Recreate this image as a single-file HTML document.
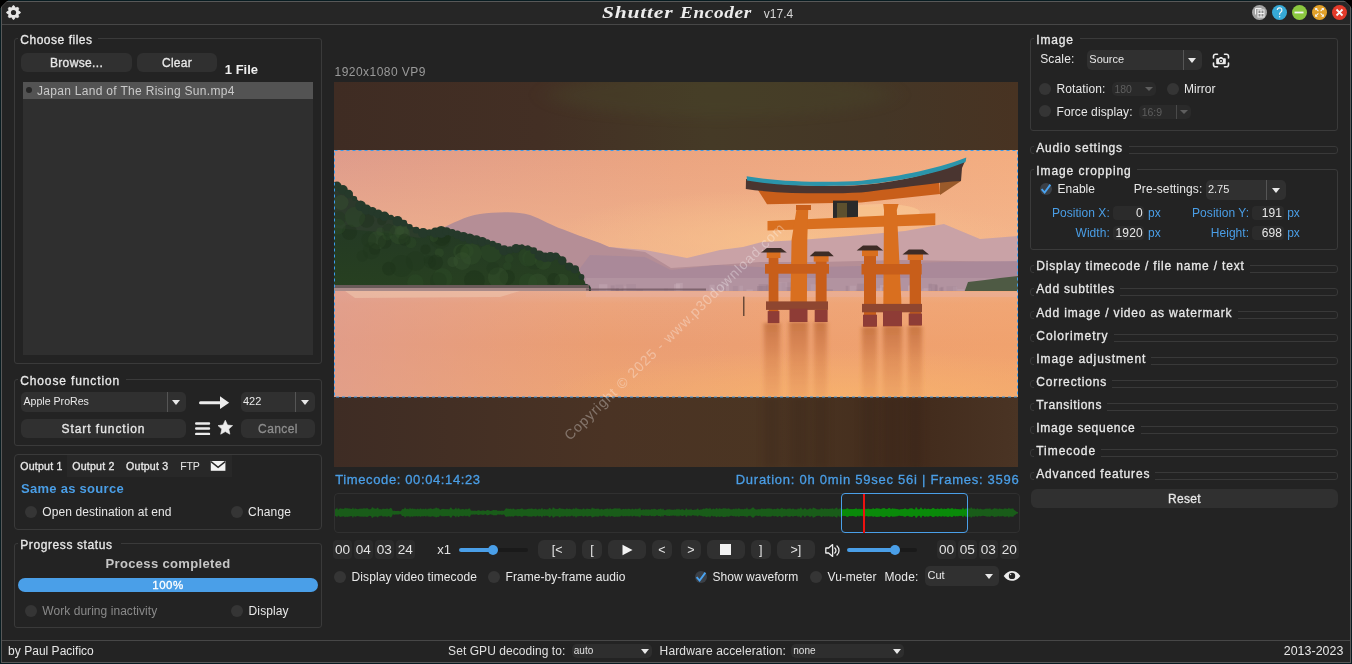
<!DOCTYPE html><html><head><meta charset="utf-8"><style>
html,body{margin:0;padding:0;width:1352px;height:664px;overflow:hidden;background:#0d2a30;}
#w{position:absolute;left:0;top:0;width:1352px;height:664px;will-change:transform;}
.t{position:absolute;white-space:nowrap;font-family:"Liberation Sans",sans-serif;}
.r{position:absolute;box-sizing:content-box;}
svg{position:absolute;}
</style></head><body><div id="w">
<div class="r" style="left:0;top:0;width:1352px;height:664px;background:#081c21"></div>
<div class="r" style="left:0;top:0;width:8px;height:8px;background:#000"></div>
<div class="r" style="left:1344px;top:0;width:8px;height:8px;background:#000"></div>
<div class="r" style="left:1px;top:1px;width:1350px;height:662px;background:#585858;border-radius:0px;clip-path:polygon(6px 0,calc(100% - 6px) 0,100% 6px,100% 100%,0 100%,0 6px);"></div>
<div class="r" style="left:2px;top:2px;width:1348px;height:660px;background:#232323;border-radius:0px;clip-path:polygon(5px 0,calc(100% - 5px) 0,100% 5px,100% 100%,0 100%,0 5px);"></div>
<div class="r" style="left:2px;top:2px;width:1348px;height:22px;background:#262626;border-radius:0px;clip-path:polygon(5px 0,calc(100% - 5px) 0,100% 5px,100% 100%,0 100%,0 5px);"></div>
<div class="r" style="left:2px;top:24px;width:1348px;height:1px;background:#474747;border-radius:0px;"></div>
<div class="r" style="left:2px;top:640px;width:1348px;height:1px;background:#474747;border-radius:0px;"></div>
<svg style="left:334px;top:82px" width="684" height="385" viewBox="334 82 684 385">
<defs>
<linearGradient id="skyh" x1="0" y1="0" x2="1" y2="0">
 <stop offset="0" stop-color="#de9b8b"/><stop offset="0.5" stop-color="#eba480"/><stop offset="1" stop-color="#f3ad80"/>
</linearGradient>
<linearGradient id="skyv" x1="0" y1="0" x2="0" y2="1">
 <stop offset="0" stop-color="#f4b890" stop-opacity="0"/><stop offset="1" stop-color="#f4bc94" stop-opacity="0.9"/>
</linearGradient>
<radialGradient id="glow" cx="0.66" cy="0.62" r="0.35">
 <stop offset="0" stop-color="#f9c58c" stop-opacity="0.7"/><stop offset="1" stop-color="#f9c58c" stop-opacity="0"/>
</radialGradient>
<radialGradient id="wglow" cx="0.75" cy="1" r="0.45">
 <stop offset="0" stop-color="#f8b46c" stop-opacity="0.75"/><stop offset="1" stop-color="#f8b46c" stop-opacity="0"/>
</radialGradient>
<linearGradient id="water" x1="0" y1="0" x2="0" y2="1">
 <stop offset="0" stop-color="#e9ad90"/><stop offset="0.12" stop-color="#eca47c"/><stop offset="0.5" stop-color="#eb9e72"/><stop offset="1" stop-color="#eea474"/>
</linearGradient>
<linearGradient id="waterh" x1="0" y1="0" x2="1" y2="0">
 <stop offset="0" stop-color="#dc9c94" stop-opacity="0.65"/><stop offset="0.4" stop-color="#e09c90" stop-opacity="0"/><stop offset="0.65" stop-color="#f8a868" stop-opacity="0.2"/><stop offset="1" stop-color="#f8a868" stop-opacity="0.4"/>
</linearGradient>
<linearGradient id="topbox" x1="0" y1="0" x2="1" y2="0">
 <stop offset="0" stop-color="#3f2c23"/><stop offset="0.3" stop-color="#432f24"/><stop offset="0.55" stop-color="#453a26"/><stop offset="0.8" stop-color="#443626"/><stop offset="1" stop-color="#483322"/>
</linearGradient>
<linearGradient id="botbox" x1="0" y1="0" x2="1" y2="0">
 <stop offset="0" stop-color="#3e2c24"/><stop offset="0.4" stop-color="#4a3324"/><stop offset="0.65" stop-color="#4b3522"/><stop offset="0.85" stop-color="#422b1c"/><stop offset="1" stop-color="#4a3424"/>
</linearGradient>
<linearGradient id="refl" x1="0" y1="0" x2="0" y2="1">
 <stop offset="0" stop-color="#b05a28" stop-opacity="0.6"/><stop offset="0.5" stop-color="#c87038" stop-opacity="0.38"/><stop offset="1" stop-color="#d88048" stop-opacity="0.2"/>
</linearGradient>
<filter id="bl" x="-50%" y="-10%" width="200%" height="120%"><feGaussianBlur stdDeviation="2 1.5"/></filter><filter id="bl3" x="-100%" y="-10%" width="300%" height="120%"><feGaussianBlur stdDeviation="4 2"/></filter><filter id="bl2" x="-20%" y="-100%" width="140%" height="300%"><feGaussianBlur stdDeviation="12 6"/></filter>
<linearGradient id="hill" x1="0" y1="0" x2="0" y2="1">
 <stop offset="0" stop-color="#233025"/><stop offset="0.45" stop-color="#243a24"/><stop offset="1" stop-color="#274020"/>
</linearGradient>
</defs>
<rect x="334" y="82" width="684" height="68" fill="url(#topbox)"/>
<rect x="334" y="397" width="684" height="70" fill="url(#botbox)"/>
<ellipse cx="720" cy="95" rx="170" ry="22" fill="#4a482c" opacity="0.32" filter="url(#bl2)"/>
<g fill="#2e1c12" opacity="0.2" filter="url(#bl3)"><rect x="764" y="397" width="16" height="70"/><rect x="789" y="397" width="19" height="70"/><rect x="814" y="397" width="13" height="70"/><rect x="862" y="397" width="15" height="70"/><rect x="883" y="397" width="19" height="70"/><rect x="908" y="397" width="14" height="70"/></g>
<rect x="334" y="150" width="684" height="145" fill="url(#skyh)"/>
<rect x="334" y="150" width="684" height="145" fill="url(#skyv)"/>
<rect x="334" y="150" width="684" height="145" fill="url(#glow)"/>
<ellipse cx="880" cy="212" rx="40" ry="8" fill="#fbd09a" opacity="0.5"/>
<path d="M580 236 L609 247 L645 250 L687 258 L720 250 L743 247 L762 242 L800 240 L850 236 L905 231 L944 224 L980 239 L1018 236 L1018 295 L580 295 Z" fill="#c9a2a6"/>
<path d="M430 295 L440 229 C452 224 465 216 480 214 C495 212 515 211 530 215 C542 219 552 226 562 229 L580 236 L600 243 L609 247 L645 252 L671 268 L717 265 L760 262 L820 262 L900 260 L1018 262 L1018 295 Z" fill="#b58e96"/>
<path d="M560 295 L590 255 L645 257 L671 270 L717 265 L780 268 L860 266 L940 262 L1018 261 L1018 295 Z" fill="#a8889a" opacity="0.85"/>
<rect x="586" y="278" width="432" height="15" fill="#b89aa6" opacity="0.55"/>
<rect x="726.0" y="284.8" width="3.2" height="7.2" fill="#d8c0c8" opacity="0.25"/>
<rect x="934.9" y="285.3" width="2.8" height="6.7" fill="#8a7080" opacity="0.25"/>
<rect x="605.7" y="289.4" width="5.5" height="2.6" fill="#d8c0c8" opacity="0.25"/>
<rect x="821.4" y="285.5" width="2.5" height="6.5" fill="#8a7080" opacity="0.25"/>
<rect x="854.9" y="289.5" width="6.7" height="2.5" fill="#9a8090" opacity="0.25"/>
<rect x="610.8" y="285.5" width="3.8" height="6.5" fill="#8a7080" opacity="0.25"/>
<rect x="711.6" y="289.1" width="3.2" height="2.9" fill="#c8b0bc" opacity="0.25"/>
<rect x="825.3" y="289.2" width="7.5" height="2.8" fill="#8a7080" opacity="0.25"/>
<rect x="746.4" y="289.5" width="6.4" height="2.5" fill="#d8c0c8" opacity="0.25"/>
<rect x="850.0" y="285.7" width="6.0" height="6.3" fill="#c8b0bc" opacity="0.25"/>
<rect x="785.6" y="287.1" width="9.4" height="4.9" fill="#8a7080" opacity="0.25"/>
<rect x="923.6" y="288.0" width="7.6" height="4.0" fill="#c8b0bc" opacity="0.25"/>
<rect x="810.6" y="284.2" width="9.0" height="7.8" fill="#c8b0bc" opacity="0.25"/>
<rect x="845.8" y="285.9" width="2.6" height="6.1" fill="#8a7080" opacity="0.25"/>
<rect x="908.0" y="286.1" width="3.2" height="5.9" fill="#d8c0c8" opacity="0.25"/>
<rect x="994.0" y="285.5" width="2.6" height="6.5" fill="#c8b0bc" opacity="0.25"/>
<rect x="732.9" y="286.0" width="4.8" height="6.0" fill="#9a8090" opacity="0.25"/>
<rect x="618.9" y="287.8" width="2.7" height="4.2" fill="#d8c0c8" opacity="0.25"/>
<rect x="615.5" y="284.8" width="7.6" height="7.2" fill="#9a8090" opacity="0.25"/>
<rect x="709.5" y="284.7" width="5.1" height="7.3" fill="#d8c0c8" opacity="0.25"/>
<rect x="985.1" y="285.1" width="4.8" height="6.9" fill="#9a8090" opacity="0.25"/>
<rect x="614.8" y="289.0" width="8.1" height="3.0" fill="#8a7080" opacity="0.25"/>
<rect x="757.1" y="286.0" width="9.3" height="6.0" fill="#8a7080" opacity="0.25"/>
<rect x="778.7" y="282.9" width="6.4" height="9.1" fill="#9a8090" opacity="0.25"/>
<rect x="952.9" y="286.7" width="4.2" height="5.3" fill="#c8b0bc" opacity="0.25"/>
<rect x="876.7" y="288.2" width="5.0" height="3.8" fill="#d8c0c8" opacity="0.25"/>
<rect x="664.0" y="288.1" width="3.9" height="3.9" fill="#9a8090" opacity="0.25"/>
<rect x="939.1" y="287.7" width="3.5" height="4.3" fill="#8a7080" opacity="0.25"/>
<rect x="766.0" y="285.5" width="5.0" height="6.5" fill="#8a7080" opacity="0.25"/>
<rect x="880.0" y="285.1" width="6.1" height="6.9" fill="#d8c0c8" opacity="0.25"/>
<rect x="781.8" y="282.4" width="9.0" height="9.6" fill="#9a8090" opacity="0.25"/>
<rect x="757.2" y="286.1" width="5.2" height="5.9" fill="#9a8090" opacity="0.25"/>
<rect x="616.1" y="288.3" width="2.5" height="3.7" fill="#8a7080" opacity="0.25"/>
<rect x="636.2" y="289.2" width="6.8" height="2.8" fill="#8a7080" opacity="0.25"/>
<rect x="815.4" y="285.1" width="9.6" height="6.9" fill="#d8c0c8" opacity="0.25"/>
<rect x="957.2" y="288.8" width="6.9" height="3.2" fill="#c8b0bc" opacity="0.25"/>
<rect x="991.3" y="286.2" width="6.8" height="5.8" fill="#d8c0c8" opacity="0.25"/>
<rect x="946.6" y="286.3" width="9.9" height="5.7" fill="#9a8090" opacity="0.25"/>
<rect x="721.0" y="284.0" width="3.2" height="8.0" fill="#c8b0bc" opacity="0.25"/>
<rect x="791.0" y="285.9" width="7.5" height="6.1" fill="#8a7080" opacity="0.25"/>
<rect x="989.4" y="288.8" width="6.2" height="3.2" fill="#d8c0c8" opacity="0.25"/>
<rect x="908.4" y="284.9" width="4.4" height="7.1" fill="#d8c0c8" opacity="0.25"/>
<rect x="882.4" y="287.1" width="4.1" height="4.9" fill="#8a7080" opacity="0.25"/>
<rect x="739.4" y="285.7" width="3.8" height="6.3" fill="#c8b0bc" opacity="0.25"/>
<rect x="857.3" y="283.7" width="6.9" height="8.3" fill="#8a7080" opacity="0.25"/>
<rect x="928.6" y="284.1" width="8.5" height="7.9" fill="#8a7080" opacity="0.25"/>
<rect x="674.0" y="284.2" width="5.9" height="7.8" fill="#d8c0c8" opacity="0.25"/>
<rect x="921.8" y="288.5" width="5.8" height="3.5" fill="#c8b0bc" opacity="0.25"/>
<rect x="777.8" y="282.1" width="9.5" height="9.9" fill="#c8b0bc" opacity="0.25"/>
<rect x="623.8" y="286.2" width="2.8" height="5.8" fill="#c8b0bc" opacity="0.25"/>
<rect x="675.8" y="282.8" width="7.0" height="9.2" fill="#d8c0c8" opacity="0.25"/>
<rect x="791.4" y="283.6" width="7.2" height="8.4" fill="#d8c0c8" opacity="0.25"/>
<rect x="940.6" y="286.9" width="3.0" height="5.1" fill="#8a7080" opacity="0.25"/>
<rect x="790.8" y="283.7" width="3.4" height="8.3" fill="#c8b0bc" opacity="0.25"/>
<rect x="626.4" y="284.2" width="9.6" height="7.8" fill="#9a8090" opacity="0.25"/>
<rect x="758.6" y="284.2" width="9.6" height="7.8" fill="#8a7080" opacity="0.25"/>
<rect x="1007.1" y="285.3" width="2.2" height="6.7" fill="#9a8090" opacity="0.25"/>
<rect x="928.7" y="283.4" width="3.2" height="8.6" fill="#9a8090" opacity="0.25"/>
<rect x="866.1" y="285.6" width="4.8" height="6.4" fill="#8a7080" opacity="0.25"/>
<rect x="599.0" y="284.2" width="8.4" height="7.8" fill="#d8c0c8" opacity="0.25"/>
<path d="M964 293 L968 282 L985 280 L1000 278 L1018 276 L1018 293 Z" fill="#4e5a44"/>
<path d="M334.0 181.8 L345.8 188.7 L363.5 205.4 L381.2 212.3 L400.9 219.2 L412.7 227.0 L426.5 231.0 L444.2 228.0 L460.0 233.0 L479.6 237.9 L495.3 242.8 L507.0 248.7 L519.0 244.8 L530.7 246.7 L542.5 254.6 L558.3 253.6 L566.2 262.5 L578.0 268.4 L585.0 282.1 L586.0 290.0 L334.0 290.0 Z" fill="url(#hill)"/>
<path d="M334 181.8 L345.8 188.7 L363.5 205.4 L381.2 212.3 L400.9 219.2 L412.7 227 L426.5 231 L420 238 L380 232 L334 228 Z" fill="#3a4236" opacity="0.4"/>
<circle cx="442.5" cy="277.9" r="9.8" fill="#2f4c28" opacity="0.35"/>
<circle cx="341.0" cy="202.5" r="7.5" fill="#3a5530" opacity="0.35"/>
<circle cx="415.5" cy="261.0" r="9.8" fill="#1f361c" opacity="0.35"/>
<circle cx="561.5" cy="280.9" r="7.2" fill="#3a5530" opacity="0.35"/>
<circle cx="537.8" cy="283.3" r="9.8" fill="#3a5530" opacity="0.35"/>
<circle cx="366.7" cy="220.2" r="7.6" fill="#1a2e18" opacity="0.35"/>
<circle cx="528.1" cy="282.7" r="9.4" fill="#2f4c28" opacity="0.35"/>
<circle cx="377.1" cy="240.4" r="9.1" fill="#3a5530" opacity="0.35"/>
<circle cx="349.4" cy="232.2" r="7.7" fill="#1a2e18" opacity="0.35"/>
<circle cx="530.1" cy="257.9" r="7.9" fill="#2f4c28" opacity="0.35"/>
<circle cx="381.8" cy="220.6" r="4.7" fill="#1a2e18" opacity="0.35"/>
<circle cx="474.4" cy="280.6" r="10.4" fill="#1a2e18" opacity="0.35"/>
<circle cx="415.4" cy="282.5" r="8.2" fill="#2f4c28" opacity="0.35"/>
<circle cx="507.2" cy="277.3" r="7.7" fill="#1a2e18" opacity="0.35"/>
<circle cx="460.9" cy="251.6" r="7.7" fill="#35522c" opacity="0.35"/>
<circle cx="384.6" cy="241.9" r="6.9" fill="#1a2e18" opacity="0.35"/>
<circle cx="444.5" cy="237.7" r="5.7" fill="#1f361c" opacity="0.35"/>
<circle cx="387.2" cy="235.5" r="4.9" fill="#2f4c28" opacity="0.35"/>
<circle cx="425.5" cy="249.4" r="5.0" fill="#1a2e18" opacity="0.35"/>
<circle cx="388.9" cy="268.6" r="6.8" fill="#1a2e18" opacity="0.35"/>
<circle cx="374.7" cy="249.2" r="5.6" fill="#1a2e18" opacity="0.35"/>
<circle cx="439.3" cy="252.7" r="4.6" fill="#35522c" opacity="0.35"/>
<circle cx="338.9" cy="218.4" r="7.1" fill="#1f361c" opacity="0.35"/>
<circle cx="430.1" cy="262.3" r="6.1" fill="#1f361c" opacity="0.35"/>
<circle cx="362.2" cy="256.1" r="5.6" fill="#1f361c" opacity="0.35"/>
<circle cx="355.0" cy="217.0" r="10.3" fill="#2f4c28" opacity="0.35"/>
<circle cx="401.6" cy="232.1" r="7.0" fill="#35522c" opacity="0.35"/>
<circle cx="435.5" cy="262.3" r="7.6" fill="#1a2e18" opacity="0.35"/>
<circle cx="509.1" cy="258.5" r="4.4" fill="#2f4c28" opacity="0.35"/>
<circle cx="440.3" cy="238.3" r="10.6" fill="#1f361c" opacity="0.35"/>
<circle cx="534.4" cy="259.4" r="10.0" fill="#1f361c" opacity="0.35"/>
<circle cx="400.1" cy="231.0" r="4.1" fill="#3a5530" opacity="0.35"/>
<circle cx="438.4" cy="280.7" r="8.4" fill="#1f361c" opacity="0.35"/>
<circle cx="465.7" cy="252.4" r="4.8" fill="#2f4c28" opacity="0.35"/>
<circle cx="399.5" cy="233.8" r="10.5" fill="#35522c" opacity="0.35"/>
<circle cx="466.8" cy="251.0" r="7.1" fill="#2f4c28" opacity="0.35"/>
<circle cx="401.6" cy="265.9" r="11.0" fill="#1f361c" opacity="0.35"/>
<circle cx="337.8" cy="226.7" r="7.9" fill="#2f4c28" opacity="0.35"/>
<circle cx="462.6" cy="251.9" r="7.1" fill="#1a2e18" opacity="0.35"/>
<circle cx="498.1" cy="277.5" r="10.2" fill="#3a5530" opacity="0.35"/>
<circle cx="410.9" cy="242.6" r="5.6" fill="#2f4c28" opacity="0.35"/>
<circle cx="493.0" cy="268.3" r="6.4" fill="#1f361c" opacity="0.35"/>
<circle cx="543.2" cy="261.3" r="8.4" fill="#35522c" opacity="0.35"/>
<circle cx="441.7" cy="237.2" r="8.7" fill="#1a2e18" opacity="0.35"/>
<circle cx="404.5" cy="239.7" r="6.1" fill="#1a2e18" opacity="0.35"/>
<circle cx="380.3" cy="231.4" r="4.0" fill="#35522c" opacity="0.35"/>
<circle cx="470.8" cy="253.9" r="10.8" fill="#35522c" opacity="0.35"/>
<circle cx="388.5" cy="230.0" r="6.3" fill="#1f361c" opacity="0.35"/>
<circle cx="452.7" cy="261.8" r="5.4" fill="#3a5530" opacity="0.35"/>
<circle cx="528.1" cy="256.8" r="9.7" fill="#2f4c28" opacity="0.35"/>
<circle cx="433.9" cy="237.8" r="4.2" fill="#35522c" opacity="0.35"/>
<circle cx="491.4" cy="251.8" r="10.7" fill="#2f4c28" opacity="0.35"/>
<circle cx="553.8" cy="279.4" r="6.3" fill="#1a2e18" opacity="0.35"/>
<circle cx="371.4" cy="250.7" r="8.5" fill="#1f361c" opacity="0.35"/>
<circle cx="462.2" cy="261.0" r="8.9" fill="#3a5530" opacity="0.35"/>
<circle cx="368.8" cy="239.7" r="7.5" fill="#1f361c" opacity="0.35"/>
<circle cx="507.3" cy="266.1" r="4.2" fill="#2f4c28" opacity="0.35"/>
<circle cx="428.2" cy="259.3" r="4.4" fill="#1f361c" opacity="0.35"/>
<circle cx="336.9" cy="186.3" r="4.7" fill="#25392a"/>
<circle cx="342.9" cy="189.9" r="4.9" fill="#25392a"/>
<circle cx="348.8" cy="194.0" r="4.2" fill="#25392a"/>
<circle cx="354.6" cy="198.6" r="2.5" fill="#25392a"/>
<circle cx="360.6" cy="205.8" r="5.3" fill="#25392a"/>
<circle cx="366.4" cy="209.6" r="5.1" fill="#25392a"/>
<circle cx="372.4" cy="211.4" r="4.3" fill="#25392a"/>
<circle cx="378.2" cy="213.8" r="4.4" fill="#25392a"/>
<circle cx="384.5" cy="216.3" r="4.8" fill="#25392a"/>
<circle cx="391.0" cy="217.4" r="2.7" fill="#25392a"/>
<circle cx="397.6" cy="221.1" r="5.1" fill="#25392a"/>
<circle cx="403.8" cy="223.2" r="3.4" fill="#25392a"/>
<circle cx="409.8" cy="226.7" r="2.8" fill="#25392a"/>
<circle cx="416.1" cy="230.1" r="3.4" fill="#25392a"/>
<circle cx="423.1" cy="233.0" r="5.1" fill="#25392a"/>
<circle cx="429.4" cy="232.4" r="3.2" fill="#25392a"/>
<circle cx="435.4" cy="232.6" r="5.1" fill="#25392a"/>
<circle cx="441.2" cy="232.0" r="5.9" fill="#25392a"/>
<circle cx="446.8" cy="231.4" r="4.2" fill="#25392a"/>
<circle cx="452.1" cy="232.8" r="3.8" fill="#25392a"/>
<circle cx="457.4" cy="234.7" r="4.2" fill="#25392a"/>
<circle cx="463.3" cy="236.8" r="4.9" fill="#25392a"/>
<circle cx="469.8" cy="238.6" r="5.2" fill="#25392a"/>
<circle cx="476.3" cy="239.9" r="4.7" fill="#25392a"/>
<circle cx="482.2" cy="241.6" r="4.7" fill="#25392a"/>
<circle cx="487.5" cy="242.0" r="2.8" fill="#25392a"/>
<circle cx="492.7" cy="243.8" r="3.0" fill="#25392a"/>
<circle cx="498.2" cy="246.3" r="3.4" fill="#25392a"/>
<circle cx="504.1" cy="250.3" r="5.1" fill="#25392a"/>
<circle cx="510.0" cy="249.9" r="3.6" fill="#25392a"/>
<circle cx="516.0" cy="248.5" r="4.5" fill="#25392a"/>
<circle cx="521.9" cy="246.8" r="2.5" fill="#25392a"/>
<circle cx="527.8" cy="247.9" r="2.7" fill="#25392a"/>
<circle cx="533.7" cy="250.7" r="3.4" fill="#25392a"/>
<circle cx="539.5" cy="255.5" r="4.9" fill="#25392a"/>
<circle cx="545.1" cy="257.4" r="4.9" fill="#25392a"/>
<circle cx="550.4" cy="257.0" r="4.9" fill="#25392a"/>
<circle cx="555.7" cy="255.9" r="3.5" fill="#25392a"/>
<circle cx="562.2" cy="260.6" r="4.3" fill="#25392a"/>
<circle cx="569.2" cy="266.5" r="4.1" fill="#25392a"/>
<circle cx="575.0" cy="269.4" r="4.1" fill="#25392a"/>
<circle cx="581.5" cy="277.0" r="2.9" fill="#25392a"/>
<circle cx="585.5" cy="289.4" r="5.6" fill="#25392a"/>
<rect x="334" y="285" width="255" height="3" fill="#6a5a58"/>
<rect x="334" y="288" width="255" height="3" fill="#a88a88"/>
<rect x="586" y="288.5" width="120" height="2" fill="#6a5058" opacity="0.7"/>
<rect x="334" y="291" width="684" height="106" fill="url(#water)"/>
<rect x="334" y="291" width="684" height="106" fill="url(#waterh)"/>
<rect x="334" y="291" width="684" height="106" fill="url(#wglow)"/>
<path d="M345 291 L520 291 L500 297 L355 298 Z" fill="#ecc0a8" opacity="0.7"/>
<rect x="586" y="292" width="432" height="5" fill="#e8b0a0" opacity="0.5"/>
<g fill="url(#refl)" filter="url(#bl)"><rect x="764" y="323" width="16" height="74"/><rect x="789" y="322" width="19" height="75"/><rect x="814" y="322" width="13" height="75"/><rect x="862" y="327" width="15" height="70"/><rect x="883" y="326" width="19" height="71"/><rect x="908" y="326" width="14" height="71"/></g>
<path d="M758 190 L861 192 L939 180 L940 194 L861 202.4 L767 204.2 Z" fill="#c85e1a"/>
<path d="M940 170 L961 168 L961 181 L940 195 Z" fill="#9a5a2a"/>
<path d="M746 179 C780 186 830 187 861.5 185 C890 183 935 175 966 159 L962 168 L961 181 C940 182 900 188 861 192.5 C830 194 780 194 745.8 189 Z" fill="#4a3530"/>
<path d="M746.7 176.2 C780 182 830 183 861.5 180.7 C890 178 935 170 966.3 157.6 L965.5 162 C935 175 890 182.5 861.5 184.8 C830 187 780 186.5 747 180.5 Z" fill="#2b94aa"/>
<rect x="833" y="200.6" width="25" height="21" fill="#2a2a2a"/>
<rect x="837" y="203" width="10" height="16" fill="#6a5a30" opacity="0.8"/>
<rect x="860" y="207" width="22" height="12" fill="#f6c28a" opacity="0.6"/>
<path d="M767.5 221 L935.3 213.3 L935.3 225 L767.5 230.4 Z" fill="#d96f1f"/>
<path d="M796.4 205 L810.9 205 L808.2 210 L807.3 240 L806.8 322 L790 322 L791.6 240 L796.4 210 Z" fill="#d96f1f"/>
<rect x="796" y="205" width="15" height="5" fill="#c85e1a"/>
<path d="M883.2 204 L898.6 204 L896.8 210 L901.3 300 L901.5 326.3 L883.2 326.3 L884 210 Z" fill="#d96f1f"/>
<rect x="768.7" y="252" width="9.7" height="71.1" fill="#c85e1a"/>
<rect x="766.7" y="252" width="13.7" height="6" fill="#d96f1f"/>
<path d="M761 252.5 L786.8 252.5 L780.9 247.9 L766.9 247.9 Z" fill="#3d2c26"/>
<rect x="767.7" y="311.1" width="11.7" height="12" fill="#8e3c36"/>
<rect x="815.7" y="255.7" width="10.9" height="66.3" fill="#c85e1a"/>
<rect x="813.7" y="255.7" width="14.9" height="6" fill="#d96f1f"/>
<path d="M809.7 256.2 L833.8 256.2 L828.8 251.5 L814.8 251.5 Z" fill="#3d2c26"/>
<rect x="814.7" y="310" width="12.9" height="12" fill="#8e3c36"/>
<rect x="864" y="250.1" width="12.0" height="76.6" fill="#c85e1a"/>
<rect x="862" y="250.1" width="16.0" height="6" fill="#d96f1f"/>
<path d="M856.7 250.6 L883.2 250.6 L877.0 245.5 L863.0 245.5 Z" fill="#3d2c26"/>
<rect x="863" y="314.7" width="14.0" height="12" fill="#8e3c36"/>
<rect x="909.7" y="254" width="11.3" height="71.5" fill="#c85e1a"/>
<rect x="907.7" y="254" width="15.3" height="6" fill="#d96f1f"/>
<path d="M902.5 254.5 L929 254.5 L922.8 249.5 L908.8 249.5 Z" fill="#3d2c26"/>
<rect x="908.7" y="313.5" width="13.3" height="12" fill="#8e3c36"/>
<rect x="765" y="264" width="64" height="9.7" fill="#c85e1a"/><rect x="861.5" y="264" width="60.2" height="10.5" fill="#c85e1a"/>
<rect x="766" y="301.4" width="62" height="8.5" fill="#8e4630"/><rect x="862" y="303.9" width="60" height="8.4" fill="#8e4630"/>
<rect x="789.5" y="308.7" width="18" height="13.3" fill="#8e3c36"/><rect x="883" y="311" width="19" height="15.3" fill="#8e3c36"/>
<rect x="743" y="296.6" width="1.5" height="19.4" fill="#6a4a38"/>
<rect x="669" y="290" width="1.5" height="16" fill="#6a4a38" opacity="0"/>
<rect x="334.5" y="150.5" width="683" height="246.5" fill="none" stroke="#3a9cec" stroke-width="1" stroke-dasharray="3 3"/>
<text x="0" y="0" transform="translate(570 441) rotate(-44.5)" font-family="Liberation Sans" font-size="14" fill="#ffffff" fill-opacity="0.32" letter-spacing="0.9">Copyright © 2025 - www.p30download.com</text>
</svg>
<svg style="left:5px;top:3.7px" width="17" height="17" viewBox="0 0 17 17">
<path fill="#e6e6e6" stroke="#e6e6e6" stroke-width="0.8" stroke-linejoin="round" d="M7.91 1.73 L9.09 1.73 L10.38 3.97 L12.87 3.29 L13.71 4.13 L13.03 6.62 L15.27 7.91 L15.27 9.09 L13.03 10.38 L13.71 12.87 L12.87 13.71 L10.38 13.03 L9.09 15.27 L7.91 15.27 L6.62 13.03 L4.13 13.71 L3.29 12.87 L3.97 10.38 L1.73 9.09 L1.73 7.91 L3.97 6.62 L3.29 4.13 L4.13 3.29 L6.62 3.97Z"/><circle cx="8.5" cy="8.5" r="2.6" fill="#262626"/></svg>
<div class="t" style="left:601.50px;top:0.91px;font-size:17px;line-height:24px;color:#ececec;font-weight:bold;letter-spacing:0.6px;font-family:'Liberation Serif';font-style:italic;transform:scaleX(1.27);transform-origin:0 0;">Shutter</div>
<div class="t" style="left:679.50px;top:0.91px;font-size:17px;line-height:24px;color:#ececec;font-weight:bold;letter-spacing:0.6px;font-family:'Liberation Serif';font-style:italic;transform:scaleX(1.13);transform-origin:0 0;">Encoder</div>
<div class="t" style="left:763.80px;top:6.04px;font-size:12px;line-height:17px;color:#d6d6d6;font-weight:normal;letter-spacing:0px;font-family:'Liberation Sans';">v17.4</div>
<div class="r" style="left:1252.0px;top:4.8px;width:15px;height:15px;border-radius:50%;background:#a3a3a3"></div>
<div class="r" style="left:1272.0px;top:4.8px;width:15px;height:15px;border-radius:50%;background:#36a9d6"></div>
<div class="r" style="left:1292.0px;top:4.8px;width:15px;height:15px;border-radius:50%;background:#8bc83f"></div>
<div class="r" style="left:1312.0px;top:4.8px;width:15px;height:15px;border-radius:50%;background:#e1a12a"></div>
<div class="r" style="left:1332.0px;top:4.8px;width:15px;height:15px;border-radius:50%;background:#e33b2b"></div>
<svg style="left:1252px;top:5px" width="95" height="15" viewBox="0 0 95 15">
<path d="M3.5 9.5V3.5H9.5" fill="none" stroke="#f2f2f2" stroke-width="1"/>
<rect x="5.5" y="4.5" width="7" height="8" fill="#f2f2f2"/>
<g fill="#8c8c8c"><rect x="6.5" y="5.5" width="2" height="2.5"/><rect x="9.5" y="5.5" width="2" height="2.5"/><rect x="6.5" y="9" width="2" height="2.5"/><rect x="9.5" y="9" width="2" height="2.5"/></g>
<path d="M25.3 5.1a2.3 2.3 0 1 1 3.6 1.9c-.9.6-1.3 1-1.3 2.1v.6" fill="none" stroke="#f4f4f4" stroke-width="1.2"/>
<circle cx="27.6" cy="11.8" r=".75" fill="#f4f4f4"/>
<rect x="42.5" y="6.6" width="9" height="1.8" fill="#f4f4f4"/>
<g stroke="#f6f6f6" stroke-width="1.1" fill="none"><path d="M66.4 6.199999999999999L64.1 3.9M68.6 6.199999999999999L70.9 3.9M66.4 8.4L64.1 10.7M68.6 8.4L70.9 10.7"/></g>
<g fill="#f6f6f6"><path d="M63.1 2.8999999999999995h2.7l-2.7 2.7z M71.9 2.8999999999999995h-2.7l2.7 2.7z M63.1 11.7h2.7l-2.7-2.7z M71.9 11.7h-2.7l2.7-2.7z"/></g>
<path d="M84.5 4.5l6 6M90.5 4.5l-6 6" stroke="#f8f8f8" stroke-width="1.8"/>
</svg>
<div class="r" style="left:14px;top:38px;width:306px;height:324px;border:1px solid #3a3a3a;border-radius:3px;"></div>
<div class="r" style="left:18px;top:37px;width:80px;height:3px;background:#232323;border-radius:0px;"></div>
<div class="t" style="left:20.30px;top:31.74px;font-size:12px;line-height:17px;color:#e8e8e8;font-weight:normal;letter-spacing:0.52px;font-family:'Liberation Sans';-webkit-text-stroke:0.3px currentColor;">Choose files</div>
<div class="r" style="left:21px;top:53px;width:111px;height:19px;background:#303030;border-radius:6px;"></div>
<div class="t" style="left:-123.50px;width:400px;text-align:center;top:55.14px;font-size:12px;line-height:17px;color:#e8e8e8;font-weight:normal;letter-spacing:0.35px;font-family:'Liberation Sans';-webkit-text-stroke:0.3px currentColor;">Browse...</div>
<div class="r" style="left:137px;top:53px;width:80px;height:19px;background:#303030;border-radius:6px;"></div>
<div class="t" style="left:-23.00px;width:400px;text-align:center;top:55.14px;font-size:12px;line-height:17px;color:#e8e8e8;font-weight:normal;letter-spacing:0.25px;font-family:'Liberation Sans';-webkit-text-stroke:0.3px currentColor;">Clear</div>
<div class="t" style="left:224.80px;top:60.70px;font-size:13px;line-height:18px;color:#f0f0f0;font-weight:bold;letter-spacing:0px;font-family:'Liberation Sans';">1 File</div>
<div class="r" style="left:23px;top:82px;width:290px;height:273px;background:#2f2f2f;border-radius:0px;"></div>
<div class="r" style="left:23px;top:82px;width:290px;height:17px;background:#535353;border-radius:0px;"></div>
<div class="r" style="left:26px;top:87.2px;width:6px;height:6px;border-radius:50%;background:#262626"></div>
<div class="t" style="left:36.90px;top:83.04px;font-size:12px;line-height:17px;color:#c9c9c9;font-weight:normal;letter-spacing:0.31px;font-family:'Liberation Sans';">Japan Land of The Rising Sun.mp4</div>
<div class="r" style="left:14px;top:379px;width:306px;height:65px;border:1px solid #3a3a3a;border-radius:3px;"></div>
<div class="r" style="left:18px;top:378px;width:108px;height:3px;background:#232323;border-radius:0px;"></div>
<div class="t" style="left:20.20px;top:372.64px;font-size:12px;line-height:17px;color:#e8e8e8;font-weight:normal;letter-spacing:0.88px;font-family:'Liberation Sans';-webkit-text-stroke:0.3px currentColor;">Choose function</div>
<div class="r" style="left:21px;top:392px;width:165px;height:20px;background:#303030;border-radius:5px;"></div>
<div class="r" style="left:167px;top:392px;width:1px;height:20px;background:#555;border-radius:0px;"></div>
<div class="r" style="left:172.00px;top:399.50px;width:0;height:0;border-left:4.50px solid transparent;border-right:4.50px solid transparent;border-top:5px solid #e8e8e8"></div>
<div class="t" style="left:23.50px;top:393.93px;font-size:10.6px;line-height:15px;color:#e8e8e8;font-weight:normal;letter-spacing:0px;font-family:'Liberation Sans';">Apple ProRes</div>
<svg style="left:198px;top:395px" width="33" height="16" viewBox="0 0 33 16">
<path d="M2.5 7.7H23" stroke="#ececec" stroke-width="3" stroke-linecap="round"/>
<path d="M22 1.3L31.2 7.7L22 14.1z" fill="#ececec"/></svg>
<div class="r" style="left:241px;top:392px;width:74px;height:20px;background:#303030;border-radius:5px;"></div>
<div class="r" style="left:295px;top:392px;width:1px;height:20px;background:#555;border-radius:0px;"></div>
<div class="r" style="left:300.50px;top:399.50px;width:0;height:0;border-left:4.50px solid transparent;border-right:4.50px solid transparent;border-top:5px solid #e8e8e8"></div>
<div class="t" style="left:243.00px;top:394.09px;font-size:11px;line-height:15px;color:#e8e8e8;font-weight:normal;letter-spacing:0px;font-family:'Liberation Sans';">422</div>
<div class="r" style="left:21px;top:419px;width:165px;height:19px;background:#303030;border-radius:6px;"></div>
<div class="t" style="left:-96.50px;width:400px;text-align:center;top:421.44px;font-size:12px;line-height:17px;color:#e8e8e8;font-weight:normal;letter-spacing:0.95px;font-family:'Liberation Sans';-webkit-text-stroke:0.3px currentColor;">Start function</div>
<svg style="left:194px;top:420px" width="18" height="16" viewBox="0 0 18 16">
<g stroke="#ececec" stroke-width="2.4" stroke-linecap="round"><path d="M2.2 3.5h12.8M2.2 8.5h12.8M2.2 13.9h12.8"/></g></svg>
<svg style="left:216px;top:418px" width="18" height="19" viewBox="0 0 18 19">
<path fill="#ececec" stroke="#ececec" stroke-width="0.6" stroke-linejoin="round" d="M9.3 2.2l2.2 4.8 5.1.6-3.8 3.5 1.1 5.1-4.6-2.6-4.6 2.6 1.1-5.1L2 7.6l5.1-.6z"/></svg>
<div class="r" style="left:241px;top:419px;width:74px;height:19px;background:#303030;border-radius:6px;"></div>
<div class="t" style="left:78.00px;width:400px;text-align:center;top:421.44px;font-size:12px;line-height:17px;color:#8d8d8d;font-weight:normal;letter-spacing:0.4px;font-family:'Liberation Sans';-webkit-text-stroke:0.3px currentColor;">Cancel</div>
<div class="r" style="left:14px;top:454px;width:306px;height:74px;border:1px solid #3a3a3a;border-radius:4px;"></div>
<div class="r" style="left:67px;top:455px;width:165px;height:22px;background:#282828;border-radius:0px;"></div>
<div class="t" style="left:20.30px;top:458.73px;font-size:10.6px;line-height:15px;color:#e8e8e8;font-weight:normal;letter-spacing:0.2px;font-family:'Liberation Sans';-webkit-text-stroke:0.3px currentColor;">Output 1</div>
<div class="t" style="left:72.30px;top:458.73px;font-size:10.6px;line-height:15px;color:#e8e8e8;font-weight:normal;letter-spacing:0.2px;font-family:'Liberation Sans';-webkit-text-stroke:0.3px currentColor;">Output 2</div>
<div class="t" style="left:126.10px;top:458.73px;font-size:10.6px;line-height:15px;color:#e8e8e8;font-weight:normal;letter-spacing:0.2px;font-family:'Liberation Sans';-webkit-text-stroke:0.3px currentColor;">Output 3</div>
<div class="t" style="left:180.30px;top:458.73px;font-size:10.6px;line-height:15px;color:#e8e8e8;font-weight:normal;letter-spacing:-0.2px;font-family:'Liberation Sans';">FTP</div>
<svg style="left:210px;top:460px" width="17" height="12" viewBox="0 0 17 12">
<rect x="0.8" y="1" width="14.6" height="9.8" fill="#f2f2f2"/>
<path d="M1 1.6L8.1 7.4L15.2 1.6" fill="none" stroke="#282828" stroke-width="1.4"/></svg>
<div class="t" style="left:21.00px;top:480.00px;font-size:13px;line-height:18px;color:#4a9ee6;font-weight:bold;letter-spacing:0.28px;font-family:'Liberation Sans';">Same as source</div>
<div class="r" style="left:25px;top:505.8px;width:12px;height:12px;border-radius:50%;background:#353535"></div>
<div class="t" style="left:42.30px;top:503.94px;font-size:12px;line-height:17px;color:#e8e8e8;font-weight:normal;letter-spacing:0.08px;font-family:'Liberation Sans';">Open destination at end</div>
<div class="r" style="left:231px;top:505.8px;width:12px;height:12px;border-radius:50%;background:#353535"></div>
<div class="t" style="left:248.10px;top:503.94px;font-size:12px;line-height:17px;color:#e8e8e8;font-weight:normal;letter-spacing:0.15px;font-family:'Liberation Sans';">Change</div>
<div class="r" style="left:14px;top:543px;width:306px;height:83px;border:1px solid #3a3a3a;border-radius:3px;"></div>
<div class="r" style="left:18px;top:542px;width:103px;height:3px;background:#232323;border-radius:0px;"></div>
<div class="t" style="left:20.20px;top:536.74px;font-size:12px;line-height:17px;color:#e8e8e8;font-weight:normal;letter-spacing:0.6px;font-family:'Liberation Sans';-webkit-text-stroke:0.3px currentColor;">Progress status</div>
<div class="t" style="left:-32.00px;width:400px;text-align:center;top:555.40px;font-size:13px;line-height:18px;color:#c6c6c6;font-weight:bold;letter-spacing:0.34px;font-family:'Liberation Sans';">Process completed</div>
<div class="r" style="left:18px;top:578px;width:300px;height:14px;background:#4a9fe8;border-radius:7px;"></div>
<div class="t" style="left:-32.00px;width:400px;text-align:center;top:577.22px;font-size:11.5px;line-height:16px;color:#ffffff;font-weight:normal;letter-spacing:0.5px;font-family:'Liberation Sans';-webkit-text-stroke:0.3px currentColor;">100%</div>
<div class="r" style="left:25px;top:604.9px;width:12px;height:12px;border-radius:50%;background:#353535"></div>
<div class="t" style="left:42.30px;top:603.14px;font-size:12px;line-height:17px;color:#8a8a8a;font-weight:normal;letter-spacing:0.05px;font-family:'Liberation Sans';">Work during inactivity</div>
<div class="r" style="left:231px;top:604.9px;width:12px;height:12px;border-radius:50%;background:#353535"></div>
<div class="t" style="left:248.60px;top:603.14px;font-size:12px;line-height:17px;color:#e8e8e8;font-weight:normal;letter-spacing:0.1px;font-family:'Liberation Sans';">Display</div>
<div class="t" style="left:334.60px;top:64.04px;font-size:12px;line-height:17px;color:#9a9a9a;font-weight:normal;letter-spacing:0.45px;font-family:'Liberation Sans';">1920x1080 VP9</div>
<div class="t" style="left:335.20px;top:471.20px;font-size:13px;line-height:18px;color:#4a9ee6;font-weight:normal;letter-spacing:0.62px;font-family:'Liberation Sans';-webkit-text-stroke:0.3px currentColor;">Timecode: 00:04:14:23</div>
<div class="t" style="right:332.50px;top:471.30px;font-size:13px;line-height:18px;color:#4a9ee6;font-weight:normal;letter-spacing:0.74px;font-family:'Liberation Sans';-webkit-text-stroke:0.3px currentColor;">Duration: 0h 0min 59sec 56i | Frames: 3596</div>
<div class="r" style="left:334px;top:493px;width:684px;height:38px;border:1px solid #303030;border-radius:4px;"></div>
<svg style="left:0;top:0" width="1352" height="664"><defs><clipPath id="sel"><rect x="841" y="493" width="127" height="40"/></clipPath></defs><path d="M335.0,509.3 L336.0,509.1 L337.0,507.6 L338.0,509.7 L339.0,509.3 L340.0,508.2 L341.0,508.4 L342.0,508.7 L343.0,508.7 L344.0,508.9 L345.0,507.5 L346.0,508.6 L347.0,508.0 L348.0,508.4 L349.0,508.6 L350.0,508.6 L351.0,509.1 L352.0,509.0 L353.0,507.2 L354.0,509.5 L355.0,508.3 L356.0,508.8 L357.0,508.9 L358.0,509.2 L359.0,508.8 L360.0,508.7 L361.0,508.4 L362.0,508.7 L363.0,508.4 L364.0,508.3 L365.0,508.6 L366.0,508.5 L367.0,508.1 L368.0,508.4 L369.0,509.6 L370.0,509.1 L371.0,509.3 L372.0,507.2 L373.0,507.6 L374.0,508.6 L375.0,508.4 L376.0,508.9 L377.0,508.0 L378.0,507.6 L379.0,509.4 L380.0,508.8 L381.0,509.6 L382.0,509.2 L383.0,508.4 L384.0,509.0 L385.0,508.7 L386.0,508.9 L387.0,508.3 L388.0,509.1 L389.0,509.3 L390.0,508.2 L391.0,507.7 L392.0,509.1 L393.0,511.3 L394.0,510.4 L395.0,510.9 L396.0,510.9 L397.0,510.9 L398.0,510.8 L399.0,510.9 L400.0,511.2 L401.0,510.9 L402.0,509.2 L403.0,509.1 L404.0,509.2 L405.0,507.3 L406.0,508.8 L407.0,509.2 L408.0,508.5 L409.0,509.4 L410.0,507.5 L411.0,509.2 L412.0,508.4 L413.0,508.4 L414.0,509.2 L415.0,508.4 L416.0,509.4 L417.0,508.9 L418.0,508.5 L419.0,509.4 L420.0,508.5 L421.0,508.5 L422.0,509.5 L423.0,508.5 L424.0,509.2 L425.0,509.1 L426.0,508.3 L427.0,509.7 L428.0,508.4 L429.0,509.0 L430.0,508.3 L431.0,508.6 L432.0,508.7 L433.0,509.3 L434.0,508.2 L435.0,508.8 L436.0,507.3 L437.0,508.3 L438.0,508.3 L439.0,508.4 L440.0,509.7 L441.0,509.4 L442.0,508.7 L443.0,509.1 L444.0,508.8 L445.0,509.3 L446.0,509.0 L447.0,509.2 L448.0,508.9 L449.0,509.4 L450.0,508.3 L451.0,507.3 L452.0,508.8 L453.0,509.6 L454.0,509.3 L455.0,509.1 L456.0,507.3 L457.0,509.6 L458.0,508.3 L459.0,508.2 L460.0,509.6 L461.0,509.2 L462.0,509.2 L463.0,508.8 L464.0,509.4 L465.0,509.5 L466.0,508.6 L467.0,509.6 L468.0,509.1 L469.0,508.5 L470.0,508.5 L471.0,510.7 L472.0,510.6 L473.0,510.7 L474.0,510.7 L475.0,510.6 L476.0,511.0 L477.0,510.7 L478.0,510.3 L479.0,510.3 L480.0,510.8 L481.0,510.9 L482.0,510.5 L483.0,510.4 L484.0,510.4 L485.0,511.0 L486.0,511.0 L487.0,509.8 L488.0,510.3 L489.0,510.3 L490.0,511.0 L491.0,510.9 L492.0,510.5 L493.0,510.3 L494.0,509.7 L495.0,510.4 L496.0,509.8 L497.0,510.4 L498.0,511.0 L499.0,510.6 L500.0,510.9 L501.0,510.8 L502.0,510.4 L503.0,510.7 L504.0,510.8 L505.0,509.6 L506.0,508.2 L507.0,508.6 L508.0,508.7 L509.0,508.7 L510.0,509.0 L511.0,508.4 L512.0,509.6 L513.0,508.3 L514.0,509.0 L515.0,509.4 L516.0,509.4 L517.0,509.2 L518.0,508.7 L519.0,509.3 L520.0,509.1 L521.0,508.8 L522.0,508.2 L523.0,509.0 L524.0,509.4 L525.0,509.2 L526.0,509.5 L527.0,509.0 L528.0,509.0 L529.0,508.5 L530.0,509.0 L531.0,508.4 L532.0,508.6 L533.0,509.0 L534.0,509.3 L535.0,508.7 L536.0,508.4 L537.0,509.4 L538.0,509.4 L539.0,508.4 L540.0,509.3 L541.0,509.2 L542.0,507.4 L543.0,509.6 L544.0,509.3 L545.0,508.8 L546.0,509.7 L547.0,509.0 L548.0,509.4 L549.0,508.3 L550.0,507.7 L551.0,509.3 L552.0,509.5 L553.0,507.1 L554.0,508.3 L555.0,508.5 L556.0,509.3 L557.0,508.7 L558.0,509.3 L559.0,508.3 L560.0,507.7 L561.0,509.0 L562.0,508.6 L563.0,508.9 L564.0,508.7 L565.0,509.4 L566.0,508.7 L567.0,508.3 L568.0,509.2 L569.0,508.8 L570.0,508.7 L571.0,509.2 L572.0,509.6 L573.0,508.6 L574.0,508.6 L575.0,509.3 L576.0,507.2 L577.0,508.9 L578.0,508.5 L579.0,509.2 L580.0,508.9 L581.0,509.2 L582.0,509.5 L583.0,508.4 L584.0,508.5 L585.0,509.4 L586.0,509.1 L587.0,508.5 L588.0,508.8 L589.0,509.1 L590.0,508.9 L591.0,509.4 L592.0,507.3 L593.0,508.5 L594.0,508.3 L595.0,508.9 L596.0,508.7 L597.0,508.7 L598.0,508.4 L599.0,508.8 L600.0,509.7 L601.0,508.7 L602.0,508.9 L603.0,509.4 L604.0,509.6 L605.0,508.7 L606.0,508.9 L607.0,508.4 L608.0,508.5 L609.0,509.6 L610.0,508.1 L611.0,508.9 L612.0,509.2 L613.0,508.7 L614.0,508.4 L615.0,508.3 L616.0,508.6 L617.0,508.5 L618.0,508.4 L619.0,508.6 L620.0,508.3 L621.0,509.6 L622.0,509.5 L623.0,508.7 L624.0,509.1 L625.0,509.2 L626.0,508.6 L627.0,509.4 L628.0,508.6 L629.0,509.1 L630.0,508.8 L631.0,509.7 L632.0,508.5 L633.0,509.0 L634.0,509.4 L635.0,509.1 L636.0,508.5 L637.0,509.4 L638.0,508.4 L639.0,509.0 L640.0,507.4 L641.0,509.8 L642.0,510.3 L643.0,509.1 L644.0,509.7 L645.0,509.6 L646.0,509.2 L647.0,509.4 L648.0,509.4 L649.0,509.2 L650.0,510.0 L651.0,509.3 L652.0,508.9 L653.0,509.5 L654.0,508.6 L655.0,509.3 L656.0,509.1 L657.0,510.2 L658.0,509.2 L659.0,509.1 L660.0,509.3 L661.0,508.2 L662.0,509.9 L663.0,508.2 L664.0,509.9 L665.0,510.2 L666.0,509.9 L667.0,509.2 L668.0,509.4 L669.0,509.3 L670.0,509.2 L671.0,509.8 L672.0,509.4 L673.0,510.0 L674.0,509.4 L675.0,509.4 L676.0,509.7 L677.0,508.5 L678.0,509.7 L679.0,508.5 L680.0,510.0 L681.0,509.5 L682.0,509.3 L683.0,509.2 L684.0,509.9 L685.0,510.2 L686.0,508.2 L687.0,508.7 L688.0,510.2 L689.0,509.1 L690.0,510.1 L691.0,508.6 L692.0,510.0 L693.0,510.0 L694.0,509.8 L695.0,509.6 L696.0,509.7 L697.0,509.1 L698.0,508.3 L699.0,510.3 L700.0,509.4 L701.0,509.6 L702.0,509.4 L703.0,508.8 L704.0,508.6 L705.0,509.2 L706.0,507.8 L707.0,508.4 L708.0,508.5 L709.0,508.9 L710.0,507.4 L711.0,509.2 L712.0,509.6 L713.0,508.6 L714.0,508.7 L715.0,509.4 L716.0,508.2 L717.0,507.9 L718.0,509.4 L719.0,508.3 L720.0,508.4 L721.0,508.8 L722.0,508.9 L723.0,508.3 L724.0,508.3 L725.0,508.5 L726.0,508.2 L727.0,509.3 L728.0,508.2 L729.0,508.6 L730.0,508.9 L731.0,509.6 L732.0,509.3 L733.0,509.2 L734.0,508.6 L735.0,509.5 L736.0,507.9 L737.0,509.5 L738.0,508.6 L739.0,508.2 L740.0,509.1 L741.0,509.2 L742.0,508.9 L743.0,509.2 L744.0,509.3 L745.0,508.4 L746.0,509.3 L747.0,507.3 L748.0,509.5 L749.0,508.9 L750.0,509.6 L751.0,508.5 L752.0,508.2 L753.0,507.0 L754.0,508.2 L755.0,509.1 L756.0,509.6 L757.0,509.6 L758.0,509.3 L759.0,509.1 L760.0,509.6 L761.0,508.8 L762.0,508.3 L763.0,509.3 L764.0,508.6 L765.0,508.9 L766.0,508.9 L767.0,508.2 L768.0,508.7 L769.0,508.3 L770.0,508.7 L771.0,508.5 L772.0,509.1 L773.0,509.4 L774.0,508.7 L775.0,508.9 L776.0,509.2 L777.0,508.5 L778.0,508.3 L779.0,509.2 L780.0,509.1 L781.0,508.5 L782.0,507.6 L783.0,508.8 L784.0,509.0 L785.0,508.6 L786.0,509.5 L787.0,509.1 L788.0,508.4 L789.0,508.7 L790.0,508.3 L791.0,509.1 L792.0,509.2 L793.0,508.3 L794.0,509.2 L795.0,509.3 L796.0,509.3 L797.0,509.6 L798.0,508.2 L799.0,508.9 L800.0,508.4 L801.0,507.3 L802.0,509.3 L803.0,509.6 L804.0,509.0 L805.0,507.7 L806.0,509.3 L807.0,509.5 L808.0,509.4 L809.0,508.7 L810.0,508.3 L811.0,508.6 L812.0,509.4 L813.0,507.2 L814.0,508.3 L815.0,507.9 L816.0,509.1 L817.0,509.3 L818.0,509.5 L819.0,509.2 L820.0,509.6 L821.0,508.3 L822.0,508.2 L823.0,509.2 L824.0,509.0 L825.0,508.0 L826.0,509.2 L827.0,508.5 L828.0,509.0 L829.0,509.0 L830.0,508.5 L831.0,508.8 L832.0,508.4 L833.0,508.3 L834.0,509.4 L835.0,508.2 L836.0,508.2 L837.0,507.2 L838.0,509.7 L839.0,508.5 L840.0,508.7 L841.0,507.4 L842.0,508.9 L843.0,509.5 L844.0,509.2 L845.0,509.1 L846.0,509.2 L847.0,508.2 L848.0,508.4 L849.0,509.3 L850.0,509.3 L851.0,508.9 L852.0,509.2 L853.0,509.3 L854.0,509.0 L855.0,508.9 L856.0,508.2 L857.0,509.0 L858.0,509.6 L859.0,508.4 L860.0,509.6 L861.0,509.1 L862.0,509.2 L863.0,508.9 L864.0,509.1 L865.0,508.6 L866.0,509.2 L867.0,509.1 L868.0,508.7 L869.0,508.8 L870.0,509.4 L871.0,508.8 L872.0,509.6 L873.0,508.1 L874.0,508.9 L875.0,508.9 L876.0,508.5 L877.0,508.3 L878.0,508.7 L879.0,508.4 L880.0,509.0 L881.0,509.3 L882.0,508.5 L883.0,508.4 L884.0,508.0 L885.0,508.5 L886.0,509.3 L887.0,508.9 L888.0,508.8 L889.0,507.8 L890.0,508.2 L891.0,509.6 L892.0,508.6 L893.0,508.4 L894.0,509.0 L895.0,508.4 L896.0,509.2 L897.0,508.8 L898.0,509.4 L899.0,509.6 L900.0,509.7 L901.0,508.9 L902.0,509.6 L903.0,509.0 L904.0,508.9 L905.0,508.2 L906.0,508.9 L907.0,509.3 L908.0,509.5 L909.0,508.8 L910.0,508.5 L911.0,508.4 L912.0,508.2 L913.0,509.1 L914.0,509.4 L915.0,509.4 L916.0,507.1 L917.0,508.3 L918.0,509.4 L919.0,509.6 L920.0,509.1 L921.0,507.3 L922.0,509.1 L923.0,509.4 L924.0,509.3 L925.0,508.0 L926.0,509.4 L927.0,508.9 L928.0,508.7 L929.0,508.7 L930.0,509.4 L931.0,509.1 L932.0,508.8 L933.0,507.8 L934.0,508.5 L935.0,509.0 L936.0,509.3 L937.0,508.7 L938.0,508.5 L939.0,509.2 L940.0,509.0 L941.0,508.6 L942.0,508.6 L943.0,509.5 L944.0,508.4 L945.0,508.9 L946.0,509.0 L947.0,508.8 L948.0,508.2 L949.0,508.6 L950.0,509.2 L951.0,508.4 L952.0,508.2 L953.0,508.6 L954.0,509.7 L955.0,508.6 L956.0,509.0 L957.0,509.3 L958.0,508.9 L959.0,509.5 L960.0,509.2 L961.0,509.4 L962.0,509.4 L963.0,507.6 L964.0,509.6 L965.0,509.4 L966.0,508.2 L967.0,508.9 L968.0,508.4 L969.0,507.9 L970.0,509.3 L971.0,507.1 L972.0,508.3 L973.0,509.0 L974.0,508.3 L975.0,508.8 L976.0,509.4 L977.0,508.2 L978.0,508.6 L979.0,509.6 L980.0,508.6 L981.0,509.0 L982.0,509.2 L983.0,509.5 L984.0,509.3 L985.0,509.1 L986.0,508.6 L987.0,508.7 L988.0,508.5 L989.0,508.9 L990.0,507.9 L991.0,509.4 L992.0,509.4 L993.0,508.9 L994.0,508.4 L995.0,507.9 L996.0,508.9 L997.0,508.3 L998.0,509.5 L999.0,508.6 L1000.0,508.6 L1001.0,508.9 L1002.0,508.8 L1003.0,509.5 L1004.0,508.4 L1005.0,508.5 L1006.0,508.5 L1007.0,509.0 L1008.0,508.8 L1009.0,507.4 L1010.0,509.3 L1011.0,508.2 L1012.0,508.9 L1013.0,507.9 L1014.0,509.8 L1015.0,510.4 L1016.0,511.2 L1017.0,511.9 L1018.0,511.9 L1018.0,513.5 L1017.0,513.4 L1016.0,514.2 L1015.0,514.9 L1014.0,515.5 L1013.0,517.2 L1012.0,516.3 L1011.0,516.9 L1010.0,516.0 L1009.0,517.7 L1008.0,516.4 L1007.0,516.2 L1006.0,516.7 L1005.0,516.7 L1004.0,516.8 L1003.0,515.7 L1002.0,516.4 L1001.0,516.3 L1000.0,516.6 L999.0,516.6 L998.0,515.8 L997.0,516.9 L996.0,516.3 L995.0,517.2 L994.0,516.8 L993.0,516.3 L992.0,515.9 L991.0,515.8 L990.0,517.2 L989.0,516.3 L988.0,516.7 L987.0,516.5 L986.0,516.6 L985.0,516.1 L984.0,515.9 L983.0,515.8 L982.0,516.0 L981.0,516.2 L980.0,516.6 L979.0,515.7 L978.0,516.6 L977.0,517.0 L976.0,515.8 L975.0,516.4 L974.0,516.9 L973.0,516.2 L972.0,516.9 L971.0,518.0 L970.0,515.9 L969.0,517.3 L968.0,516.8 L967.0,516.3 L966.0,516.9 L965.0,515.8 L964.0,515.6 L963.0,517.5 L962.0,515.8 L961.0,515.8 L960.0,516.0 L959.0,515.7 L958.0,516.4 L957.0,515.9 L956.0,516.2 L955.0,516.6 L954.0,515.6 L953.0,516.6 L952.0,517.0 L951.0,516.8 L950.0,516.0 L949.0,516.6 L948.0,517.0 L947.0,516.4 L946.0,516.2 L945.0,516.3 L944.0,516.8 L943.0,515.7 L942.0,516.6 L941.0,516.6 L940.0,516.2 L939.0,516.0 L938.0,516.7 L937.0,516.5 L936.0,515.9 L935.0,516.2 L934.0,516.7 L933.0,517.3 L932.0,516.4 L931.0,516.1 L930.0,515.8 L929.0,516.5 L928.0,516.5 L927.0,516.4 L926.0,515.9 L925.0,517.2 L924.0,515.9 L923.0,515.8 L922.0,516.1 L921.0,517.9 L920.0,516.1 L919.0,515.6 L918.0,515.9 L917.0,516.9 L916.0,518.0 L915.0,515.9 L914.0,515.8 L913.0,516.2 L912.0,517.0 L911.0,516.8 L910.0,516.6 L909.0,516.4 L908.0,515.7 L907.0,516.0 L906.0,516.3 L905.0,516.9 L904.0,516.3 L903.0,516.2 L902.0,515.7 L901.0,516.3 L900.0,515.6 L899.0,515.7 L898.0,515.8 L897.0,516.4 L896.0,516.0 L895.0,516.8 L894.0,516.2 L893.0,516.8 L892.0,516.6 L891.0,515.7 L890.0,516.9 L889.0,517.3 L888.0,516.4 L887.0,516.3 L886.0,515.9 L885.0,516.7 L884.0,517.2 L883.0,516.8 L882.0,516.7 L881.0,516.0 L880.0,516.2 L879.0,516.8 L878.0,516.5 L877.0,516.9 L876.0,516.7 L875.0,516.3 L874.0,516.3 L873.0,517.1 L872.0,515.7 L871.0,516.4 L870.0,515.9 L869.0,516.4 L868.0,516.5 L867.0,516.1 L866.0,516.0 L865.0,516.6 L864.0,516.2 L863.0,516.3 L862.0,516.1 L861.0,516.1 L860.0,515.6 L859.0,516.8 L858.0,515.6 L857.0,516.2 L856.0,517.0 L855.0,516.3 L854.0,516.2 L853.0,516.0 L852.0,516.0 L851.0,516.3 L850.0,515.9 L849.0,516.0 L848.0,516.8 L847.0,516.9 L846.0,516.1 L845.0,516.1 L844.0,516.0 L843.0,515.8 L842.0,516.3 L841.0,517.8 L840.0,516.5 L839.0,516.7 L838.0,515.6 L837.0,517.9 L836.0,516.9 L835.0,517.0 L834.0,515.8 L833.0,516.9 L832.0,516.8 L831.0,516.4 L830.0,516.7 L829.0,516.2 L828.0,516.2 L827.0,516.7 L826.0,516.0 L825.0,517.1 L824.0,516.2 L823.0,516.1 L822.0,516.9 L821.0,516.9 L820.0,515.7 L819.0,516.1 L818.0,515.8 L817.0,516.0 L816.0,516.1 L815.0,517.2 L814.0,516.9 L813.0,517.9 L812.0,515.8 L811.0,516.6 L810.0,516.9 L809.0,516.5 L808.0,515.8 L807.0,515.8 L806.0,515.9 L805.0,517.5 L804.0,516.2 L803.0,515.6 L802.0,516.0 L801.0,517.9 L800.0,516.7 L799.0,516.3 L798.0,517.0 L797.0,515.7 L796.0,515.9 L795.0,516.0 L794.0,516.0 L793.0,516.9 L792.0,516.0 L791.0,516.1 L790.0,516.9 L789.0,516.5 L788.0,516.8 L787.0,516.1 L786.0,515.7 L785.0,516.6 L784.0,516.2 L783.0,516.4 L782.0,517.6 L781.0,516.7 L780.0,516.1 L779.0,516.0 L778.0,516.9 L777.0,516.7 L776.0,516.1 L775.0,516.3 L774.0,516.5 L773.0,515.8 L772.0,516.1 L771.0,516.7 L770.0,516.5 L769.0,516.8 L768.0,516.5 L767.0,516.9 L766.0,516.3 L765.0,516.3 L764.0,516.6 L763.0,515.9 L762.0,516.9 L761.0,516.4 L760.0,515.6 L759.0,516.1 L758.0,515.9 L757.0,515.7 L756.0,515.6 L755.0,516.2 L754.0,517.0 L753.0,518.1 L752.0,516.9 L751.0,516.6 L750.0,515.6 L749.0,516.3 L748.0,515.7 L747.0,517.8 L746.0,516.0 L745.0,516.8 L744.0,516.0 L743.0,516.1 L742.0,516.3 L741.0,516.0 L740.0,516.1 L739.0,516.9 L738.0,516.5 L737.0,515.8 L736.0,517.3 L735.0,515.7 L734.0,516.6 L733.0,516.0 L732.0,515.9 L731.0,515.6 L730.0,516.3 L729.0,516.6 L728.0,517.0 L727.0,516.0 L726.0,517.0 L725.0,516.7 L724.0,516.9 L723.0,516.9 L722.0,516.3 L721.0,516.4 L720.0,516.8 L719.0,516.9 L718.0,515.9 L717.0,517.3 L716.0,517.0 L715.0,515.9 L714.0,516.5 L713.0,516.6 L712.0,515.7 L711.0,516.0 L710.0,517.7 L709.0,516.3 L708.0,516.7 L707.0,516.7 L706.0,517.3 L705.0,516.0 L704.0,516.6 L703.0,516.4 L702.0,515.9 L701.0,515.7 L700.0,515.8 L699.0,515.0 L698.0,516.8 L697.0,516.1 L696.0,515.6 L695.0,515.7 L694.0,515.5 L693.0,515.2 L692.0,515.2 L691.0,516.6 L690.0,515.2 L689.0,516.2 L688.0,515.1 L687.0,516.5 L686.0,517.0 L685.0,515.1 L684.0,515.4 L683.0,516.0 L682.0,516.0 L681.0,515.7 L680.0,515.3 L679.0,516.7 L678.0,515.5 L677.0,516.7 L676.0,515.5 L675.0,515.8 L674.0,515.8 L673.0,515.3 L672.0,515.9 L671.0,515.5 L670.0,516.0 L669.0,515.9 L668.0,515.8 L667.0,516.0 L666.0,515.4 L665.0,515.1 L664.0,515.3 L663.0,517.0 L662.0,515.3 L661.0,517.0 L660.0,515.9 L659.0,516.1 L658.0,516.0 L657.0,515.0 L656.0,516.1 L655.0,515.9 L654.0,516.6 L653.0,515.8 L652.0,516.3 L651.0,515.9 L650.0,515.3 L649.0,516.0 L648.0,515.9 L647.0,515.8 L646.0,516.0 L645.0,515.7 L644.0,515.5 L643.0,516.1 L642.0,515.0 L641.0,515.4 L640.0,517.7 L639.0,516.2 L638.0,516.8 L637.0,515.8 L636.0,516.7 L635.0,516.1 L634.0,515.8 L633.0,516.2 L632.0,516.7 L631.0,515.6 L630.0,516.4 L629.0,516.1 L628.0,516.6 L627.0,515.8 L626.0,516.6 L625.0,516.0 L624.0,516.2 L623.0,516.5 L622.0,515.8 L621.0,515.7 L620.0,516.8 L619.0,516.6 L618.0,516.8 L617.0,516.7 L616.0,516.6 L615.0,516.9 L614.0,516.8 L613.0,516.5 L612.0,516.0 L611.0,516.3 L610.0,517.0 L609.0,515.6 L608.0,516.7 L607.0,516.8 L606.0,516.4 L605.0,516.5 L604.0,515.6 L603.0,515.8 L602.0,516.3 L601.0,516.5 L600.0,515.6 L599.0,516.4 L598.0,516.8 L597.0,516.5 L596.0,516.5 L595.0,516.3 L594.0,516.9 L593.0,516.7 L592.0,517.8 L591.0,515.8 L590.0,516.3 L589.0,516.1 L588.0,516.4 L587.0,516.7 L586.0,516.1 L585.0,515.8 L584.0,516.7 L583.0,516.8 L582.0,515.7 L581.0,516.1 L580.0,516.3 L579.0,516.0 L578.0,516.6 L577.0,516.3 L576.0,517.9 L575.0,515.9 L574.0,516.6 L573.0,516.6 L572.0,515.6 L571.0,516.0 L570.0,516.5 L569.0,516.4 L568.0,516.0 L567.0,516.9 L566.0,516.5 L565.0,515.8 L564.0,516.5 L563.0,516.4 L562.0,516.6 L561.0,516.3 L560.0,517.5 L559.0,516.9 L558.0,515.9 L557.0,516.5 L556.0,516.0 L555.0,516.7 L554.0,516.9 L553.0,518.0 L552.0,515.7 L551.0,515.9 L550.0,517.5 L549.0,516.9 L548.0,515.8 L547.0,516.2 L546.0,515.6 L545.0,516.4 L544.0,516.0 L543.0,515.7 L542.0,517.7 L541.0,516.0 L540.0,515.9 L539.0,516.8 L538.0,515.8 L537.0,515.8 L536.0,516.8 L535.0,516.5 L534.0,515.9 L533.0,516.2 L532.0,516.6 L531.0,516.8 L530.0,516.2 L529.0,516.7 L528.0,516.2 L527.0,516.2 L526.0,515.8 L525.0,516.0 L524.0,515.8 L523.0,516.2 L522.0,517.0 L521.0,516.4 L520.0,516.1 L519.0,516.0 L518.0,516.5 L517.0,516.0 L516.0,515.8 L515.0,515.8 L514.0,516.2 L513.0,516.9 L512.0,515.7 L511.0,516.8 L510.0,516.2 L509.0,516.5 L508.0,516.5 L507.0,516.6 L506.0,516.9 L505.0,515.7 L504.0,514.5 L503.0,514.6 L502.0,514.9 L501.0,514.5 L500.0,514.5 L499.0,514.7 L498.0,514.3 L497.0,514.9 L496.0,515.5 L495.0,514.9 L494.0,515.5 L493.0,515.0 L492.0,514.8 L491.0,514.4 L490.0,514.3 L489.0,515.0 L488.0,515.0 L487.0,515.5 L486.0,514.3 L485.0,514.3 L484.0,514.8 L483.0,514.9 L482.0,514.8 L481.0,514.4 L480.0,514.5 L479.0,515.0 L478.0,515.0 L477.0,514.6 L476.0,514.3 L475.0,514.7 L474.0,514.6 L473.0,514.6 L472.0,514.7 L471.0,514.6 L470.0,516.7 L469.0,516.7 L468.0,516.1 L467.0,515.7 L466.0,516.6 L465.0,515.7 L464.0,515.8 L463.0,516.4 L462.0,516.1 L461.0,516.0 L460.0,515.7 L459.0,516.9 L458.0,516.9 L457.0,515.6 L456.0,517.8 L455.0,516.2 L454.0,515.9 L453.0,515.6 L452.0,516.4 L451.0,517.9 L450.0,516.9 L449.0,515.8 L448.0,516.3 L447.0,516.1 L446.0,516.2 L445.0,515.9 L444.0,516.4 L443.0,516.1 L442.0,516.5 L441.0,515.8 L440.0,515.6 L439.0,516.8 L438.0,516.9 L437.0,516.8 L436.0,517.8 L435.0,516.4 L434.0,517.0 L433.0,516.0 L432.0,516.5 L431.0,516.6 L430.0,516.9 L429.0,516.2 L428.0,516.8 L427.0,515.6 L426.0,516.9 L425.0,516.1 L424.0,516.0 L423.0,516.7 L422.0,515.7 L421.0,516.7 L420.0,516.7 L419.0,515.8 L418.0,516.7 L417.0,516.3 L416.0,515.9 L415.0,516.8 L414.0,516.0 L413.0,516.8 L412.0,516.7 L411.0,516.0 L410.0,517.7 L409.0,515.8 L408.0,516.7 L407.0,516.0 L406.0,516.4 L405.0,517.8 L404.0,516.0 L403.0,516.1 L402.0,516.1 L401.0,514.4 L400.0,514.1 L399.0,514.4 L398.0,514.5 L397.0,514.4 L396.0,514.4 L395.0,514.4 L394.0,514.9 L393.0,514.0 L392.0,516.1 L391.0,517.5 L390.0,516.9 L389.0,515.9 L388.0,516.2 L387.0,516.9 L386.0,516.3 L385.0,516.5 L384.0,516.2 L383.0,516.8 L382.0,516.0 L381.0,515.6 L380.0,516.4 L379.0,515.8 L378.0,517.5 L377.0,517.1 L376.0,516.3 L375.0,516.8 L374.0,516.6 L373.0,517.6 L372.0,517.9 L371.0,516.0 L370.0,516.1 L369.0,515.7 L368.0,516.8 L367.0,517.1 L366.0,516.7 L365.0,516.6 L364.0,516.8 L363.0,516.8 L362.0,516.5 L361.0,516.8 L360.0,516.5 L359.0,516.4 L358.0,516.1 L357.0,516.3 L356.0,516.4 L355.0,516.9 L354.0,515.7 L353.0,517.9 L352.0,516.2 L351.0,516.1 L350.0,516.6 L349.0,516.6 L348.0,516.8 L347.0,517.1 L346.0,516.6 L345.0,517.6 L344.0,516.3 L343.0,516.5 L342.0,516.5 L341.0,516.7 L340.0,517.0 L339.0,515.9 L338.0,515.6 L337.0,517.6 L336.0,516.1 L335.0,515.9 Z" fill="#195c19"/><path d="M335.0,509.3 L336.0,509.1 L337.0,507.6 L338.0,509.7 L339.0,509.3 L340.0,508.2 L341.0,508.4 L342.0,508.7 L343.0,508.7 L344.0,508.9 L345.0,507.5 L346.0,508.6 L347.0,508.0 L348.0,508.4 L349.0,508.6 L350.0,508.6 L351.0,509.1 L352.0,509.0 L353.0,507.2 L354.0,509.5 L355.0,508.3 L356.0,508.8 L357.0,508.9 L358.0,509.2 L359.0,508.8 L360.0,508.7 L361.0,508.4 L362.0,508.7 L363.0,508.4 L364.0,508.3 L365.0,508.6 L366.0,508.5 L367.0,508.1 L368.0,508.4 L369.0,509.6 L370.0,509.1 L371.0,509.3 L372.0,507.2 L373.0,507.6 L374.0,508.6 L375.0,508.4 L376.0,508.9 L377.0,508.0 L378.0,507.6 L379.0,509.4 L380.0,508.8 L381.0,509.6 L382.0,509.2 L383.0,508.4 L384.0,509.0 L385.0,508.7 L386.0,508.9 L387.0,508.3 L388.0,509.1 L389.0,509.3 L390.0,508.2 L391.0,507.7 L392.0,509.1 L393.0,511.3 L394.0,510.4 L395.0,510.9 L396.0,510.9 L397.0,510.9 L398.0,510.8 L399.0,510.9 L400.0,511.2 L401.0,510.9 L402.0,509.2 L403.0,509.1 L404.0,509.2 L405.0,507.3 L406.0,508.8 L407.0,509.2 L408.0,508.5 L409.0,509.4 L410.0,507.5 L411.0,509.2 L412.0,508.4 L413.0,508.4 L414.0,509.2 L415.0,508.4 L416.0,509.4 L417.0,508.9 L418.0,508.5 L419.0,509.4 L420.0,508.5 L421.0,508.5 L422.0,509.5 L423.0,508.5 L424.0,509.2 L425.0,509.1 L426.0,508.3 L427.0,509.7 L428.0,508.4 L429.0,509.0 L430.0,508.3 L431.0,508.6 L432.0,508.7 L433.0,509.3 L434.0,508.2 L435.0,508.8 L436.0,507.3 L437.0,508.3 L438.0,508.3 L439.0,508.4 L440.0,509.7 L441.0,509.4 L442.0,508.7 L443.0,509.1 L444.0,508.8 L445.0,509.3 L446.0,509.0 L447.0,509.2 L448.0,508.9 L449.0,509.4 L450.0,508.3 L451.0,507.3 L452.0,508.8 L453.0,509.6 L454.0,509.3 L455.0,509.1 L456.0,507.3 L457.0,509.6 L458.0,508.3 L459.0,508.2 L460.0,509.6 L461.0,509.2 L462.0,509.2 L463.0,508.8 L464.0,509.4 L465.0,509.5 L466.0,508.6 L467.0,509.6 L468.0,509.1 L469.0,508.5 L470.0,508.5 L471.0,510.7 L472.0,510.6 L473.0,510.7 L474.0,510.7 L475.0,510.6 L476.0,511.0 L477.0,510.7 L478.0,510.3 L479.0,510.3 L480.0,510.8 L481.0,510.9 L482.0,510.5 L483.0,510.4 L484.0,510.4 L485.0,511.0 L486.0,511.0 L487.0,509.8 L488.0,510.3 L489.0,510.3 L490.0,511.0 L491.0,510.9 L492.0,510.5 L493.0,510.3 L494.0,509.7 L495.0,510.4 L496.0,509.8 L497.0,510.4 L498.0,511.0 L499.0,510.6 L500.0,510.9 L501.0,510.8 L502.0,510.4 L503.0,510.7 L504.0,510.8 L505.0,509.6 L506.0,508.2 L507.0,508.6 L508.0,508.7 L509.0,508.7 L510.0,509.0 L511.0,508.4 L512.0,509.6 L513.0,508.3 L514.0,509.0 L515.0,509.4 L516.0,509.4 L517.0,509.2 L518.0,508.7 L519.0,509.3 L520.0,509.1 L521.0,508.8 L522.0,508.2 L523.0,509.0 L524.0,509.4 L525.0,509.2 L526.0,509.5 L527.0,509.0 L528.0,509.0 L529.0,508.5 L530.0,509.0 L531.0,508.4 L532.0,508.6 L533.0,509.0 L534.0,509.3 L535.0,508.7 L536.0,508.4 L537.0,509.4 L538.0,509.4 L539.0,508.4 L540.0,509.3 L541.0,509.2 L542.0,507.4 L543.0,509.6 L544.0,509.3 L545.0,508.8 L546.0,509.7 L547.0,509.0 L548.0,509.4 L549.0,508.3 L550.0,507.7 L551.0,509.3 L552.0,509.5 L553.0,507.1 L554.0,508.3 L555.0,508.5 L556.0,509.3 L557.0,508.7 L558.0,509.3 L559.0,508.3 L560.0,507.7 L561.0,509.0 L562.0,508.6 L563.0,508.9 L564.0,508.7 L565.0,509.4 L566.0,508.7 L567.0,508.3 L568.0,509.2 L569.0,508.8 L570.0,508.7 L571.0,509.2 L572.0,509.6 L573.0,508.6 L574.0,508.6 L575.0,509.3 L576.0,507.2 L577.0,508.9 L578.0,508.5 L579.0,509.2 L580.0,508.9 L581.0,509.2 L582.0,509.5 L583.0,508.4 L584.0,508.5 L585.0,509.4 L586.0,509.1 L587.0,508.5 L588.0,508.8 L589.0,509.1 L590.0,508.9 L591.0,509.4 L592.0,507.3 L593.0,508.5 L594.0,508.3 L595.0,508.9 L596.0,508.7 L597.0,508.7 L598.0,508.4 L599.0,508.8 L600.0,509.7 L601.0,508.7 L602.0,508.9 L603.0,509.4 L604.0,509.6 L605.0,508.7 L606.0,508.9 L607.0,508.4 L608.0,508.5 L609.0,509.6 L610.0,508.1 L611.0,508.9 L612.0,509.2 L613.0,508.7 L614.0,508.4 L615.0,508.3 L616.0,508.6 L617.0,508.5 L618.0,508.4 L619.0,508.6 L620.0,508.3 L621.0,509.6 L622.0,509.5 L623.0,508.7 L624.0,509.1 L625.0,509.2 L626.0,508.6 L627.0,509.4 L628.0,508.6 L629.0,509.1 L630.0,508.8 L631.0,509.7 L632.0,508.5 L633.0,509.0 L634.0,509.4 L635.0,509.1 L636.0,508.5 L637.0,509.4 L638.0,508.4 L639.0,509.0 L640.0,507.4 L641.0,509.8 L642.0,510.3 L643.0,509.1 L644.0,509.7 L645.0,509.6 L646.0,509.2 L647.0,509.4 L648.0,509.4 L649.0,509.2 L650.0,510.0 L651.0,509.3 L652.0,508.9 L653.0,509.5 L654.0,508.6 L655.0,509.3 L656.0,509.1 L657.0,510.2 L658.0,509.2 L659.0,509.1 L660.0,509.3 L661.0,508.2 L662.0,509.9 L663.0,508.2 L664.0,509.9 L665.0,510.2 L666.0,509.9 L667.0,509.2 L668.0,509.4 L669.0,509.3 L670.0,509.2 L671.0,509.8 L672.0,509.4 L673.0,510.0 L674.0,509.4 L675.0,509.4 L676.0,509.7 L677.0,508.5 L678.0,509.7 L679.0,508.5 L680.0,510.0 L681.0,509.5 L682.0,509.3 L683.0,509.2 L684.0,509.9 L685.0,510.2 L686.0,508.2 L687.0,508.7 L688.0,510.2 L689.0,509.1 L690.0,510.1 L691.0,508.6 L692.0,510.0 L693.0,510.0 L694.0,509.8 L695.0,509.6 L696.0,509.7 L697.0,509.1 L698.0,508.3 L699.0,510.3 L700.0,509.4 L701.0,509.6 L702.0,509.4 L703.0,508.8 L704.0,508.6 L705.0,509.2 L706.0,507.8 L707.0,508.4 L708.0,508.5 L709.0,508.9 L710.0,507.4 L711.0,509.2 L712.0,509.6 L713.0,508.6 L714.0,508.7 L715.0,509.4 L716.0,508.2 L717.0,507.9 L718.0,509.4 L719.0,508.3 L720.0,508.4 L721.0,508.8 L722.0,508.9 L723.0,508.3 L724.0,508.3 L725.0,508.5 L726.0,508.2 L727.0,509.3 L728.0,508.2 L729.0,508.6 L730.0,508.9 L731.0,509.6 L732.0,509.3 L733.0,509.2 L734.0,508.6 L735.0,509.5 L736.0,507.9 L737.0,509.5 L738.0,508.6 L739.0,508.2 L740.0,509.1 L741.0,509.2 L742.0,508.9 L743.0,509.2 L744.0,509.3 L745.0,508.4 L746.0,509.3 L747.0,507.3 L748.0,509.5 L749.0,508.9 L750.0,509.6 L751.0,508.5 L752.0,508.2 L753.0,507.0 L754.0,508.2 L755.0,509.1 L756.0,509.6 L757.0,509.6 L758.0,509.3 L759.0,509.1 L760.0,509.6 L761.0,508.8 L762.0,508.3 L763.0,509.3 L764.0,508.6 L765.0,508.9 L766.0,508.9 L767.0,508.2 L768.0,508.7 L769.0,508.3 L770.0,508.7 L771.0,508.5 L772.0,509.1 L773.0,509.4 L774.0,508.7 L775.0,508.9 L776.0,509.2 L777.0,508.5 L778.0,508.3 L779.0,509.2 L780.0,509.1 L781.0,508.5 L782.0,507.6 L783.0,508.8 L784.0,509.0 L785.0,508.6 L786.0,509.5 L787.0,509.1 L788.0,508.4 L789.0,508.7 L790.0,508.3 L791.0,509.1 L792.0,509.2 L793.0,508.3 L794.0,509.2 L795.0,509.3 L796.0,509.3 L797.0,509.6 L798.0,508.2 L799.0,508.9 L800.0,508.4 L801.0,507.3 L802.0,509.3 L803.0,509.6 L804.0,509.0 L805.0,507.7 L806.0,509.3 L807.0,509.5 L808.0,509.4 L809.0,508.7 L810.0,508.3 L811.0,508.6 L812.0,509.4 L813.0,507.2 L814.0,508.3 L815.0,507.9 L816.0,509.1 L817.0,509.3 L818.0,509.5 L819.0,509.2 L820.0,509.6 L821.0,508.3 L822.0,508.2 L823.0,509.2 L824.0,509.0 L825.0,508.0 L826.0,509.2 L827.0,508.5 L828.0,509.0 L829.0,509.0 L830.0,508.5 L831.0,508.8 L832.0,508.4 L833.0,508.3 L834.0,509.4 L835.0,508.2 L836.0,508.2 L837.0,507.2 L838.0,509.7 L839.0,508.5 L840.0,508.7 L841.0,507.4 L842.0,508.9 L843.0,509.5 L844.0,509.2 L845.0,509.1 L846.0,509.2 L847.0,508.2 L848.0,508.4 L849.0,509.3 L850.0,509.3 L851.0,508.9 L852.0,509.2 L853.0,509.3 L854.0,509.0 L855.0,508.9 L856.0,508.2 L857.0,509.0 L858.0,509.6 L859.0,508.4 L860.0,509.6 L861.0,509.1 L862.0,509.2 L863.0,508.9 L864.0,509.1 L865.0,508.6 L866.0,509.2 L867.0,509.1 L868.0,508.7 L869.0,508.8 L870.0,509.4 L871.0,508.8 L872.0,509.6 L873.0,508.1 L874.0,508.9 L875.0,508.9 L876.0,508.5 L877.0,508.3 L878.0,508.7 L879.0,508.4 L880.0,509.0 L881.0,509.3 L882.0,508.5 L883.0,508.4 L884.0,508.0 L885.0,508.5 L886.0,509.3 L887.0,508.9 L888.0,508.8 L889.0,507.8 L890.0,508.2 L891.0,509.6 L892.0,508.6 L893.0,508.4 L894.0,509.0 L895.0,508.4 L896.0,509.2 L897.0,508.8 L898.0,509.4 L899.0,509.6 L900.0,509.7 L901.0,508.9 L902.0,509.6 L903.0,509.0 L904.0,508.9 L905.0,508.2 L906.0,508.9 L907.0,509.3 L908.0,509.5 L909.0,508.8 L910.0,508.5 L911.0,508.4 L912.0,508.2 L913.0,509.1 L914.0,509.4 L915.0,509.4 L916.0,507.1 L917.0,508.3 L918.0,509.4 L919.0,509.6 L920.0,509.1 L921.0,507.3 L922.0,509.1 L923.0,509.4 L924.0,509.3 L925.0,508.0 L926.0,509.4 L927.0,508.9 L928.0,508.7 L929.0,508.7 L930.0,509.4 L931.0,509.1 L932.0,508.8 L933.0,507.8 L934.0,508.5 L935.0,509.0 L936.0,509.3 L937.0,508.7 L938.0,508.5 L939.0,509.2 L940.0,509.0 L941.0,508.6 L942.0,508.6 L943.0,509.5 L944.0,508.4 L945.0,508.9 L946.0,509.0 L947.0,508.8 L948.0,508.2 L949.0,508.6 L950.0,509.2 L951.0,508.4 L952.0,508.2 L953.0,508.6 L954.0,509.7 L955.0,508.6 L956.0,509.0 L957.0,509.3 L958.0,508.9 L959.0,509.5 L960.0,509.2 L961.0,509.4 L962.0,509.4 L963.0,507.6 L964.0,509.6 L965.0,509.4 L966.0,508.2 L967.0,508.9 L968.0,508.4 L969.0,507.9 L970.0,509.3 L971.0,507.1 L972.0,508.3 L973.0,509.0 L974.0,508.3 L975.0,508.8 L976.0,509.4 L977.0,508.2 L978.0,508.6 L979.0,509.6 L980.0,508.6 L981.0,509.0 L982.0,509.2 L983.0,509.5 L984.0,509.3 L985.0,509.1 L986.0,508.6 L987.0,508.7 L988.0,508.5 L989.0,508.9 L990.0,507.9 L991.0,509.4 L992.0,509.4 L993.0,508.9 L994.0,508.4 L995.0,507.9 L996.0,508.9 L997.0,508.3 L998.0,509.5 L999.0,508.6 L1000.0,508.6 L1001.0,508.9 L1002.0,508.8 L1003.0,509.5 L1004.0,508.4 L1005.0,508.5 L1006.0,508.5 L1007.0,509.0 L1008.0,508.8 L1009.0,507.4 L1010.0,509.3 L1011.0,508.2 L1012.0,508.9 L1013.0,507.9 L1014.0,509.8 L1015.0,510.4 L1016.0,511.2 L1017.0,511.9 L1018.0,511.9 L1018.0,513.5 L1017.0,513.4 L1016.0,514.2 L1015.0,514.9 L1014.0,515.5 L1013.0,517.2 L1012.0,516.3 L1011.0,516.9 L1010.0,516.0 L1009.0,517.7 L1008.0,516.4 L1007.0,516.2 L1006.0,516.7 L1005.0,516.7 L1004.0,516.8 L1003.0,515.7 L1002.0,516.4 L1001.0,516.3 L1000.0,516.6 L999.0,516.6 L998.0,515.8 L997.0,516.9 L996.0,516.3 L995.0,517.2 L994.0,516.8 L993.0,516.3 L992.0,515.9 L991.0,515.8 L990.0,517.2 L989.0,516.3 L988.0,516.7 L987.0,516.5 L986.0,516.6 L985.0,516.1 L984.0,515.9 L983.0,515.8 L982.0,516.0 L981.0,516.2 L980.0,516.6 L979.0,515.7 L978.0,516.6 L977.0,517.0 L976.0,515.8 L975.0,516.4 L974.0,516.9 L973.0,516.2 L972.0,516.9 L971.0,518.0 L970.0,515.9 L969.0,517.3 L968.0,516.8 L967.0,516.3 L966.0,516.9 L965.0,515.8 L964.0,515.6 L963.0,517.5 L962.0,515.8 L961.0,515.8 L960.0,516.0 L959.0,515.7 L958.0,516.4 L957.0,515.9 L956.0,516.2 L955.0,516.6 L954.0,515.6 L953.0,516.6 L952.0,517.0 L951.0,516.8 L950.0,516.0 L949.0,516.6 L948.0,517.0 L947.0,516.4 L946.0,516.2 L945.0,516.3 L944.0,516.8 L943.0,515.7 L942.0,516.6 L941.0,516.6 L940.0,516.2 L939.0,516.0 L938.0,516.7 L937.0,516.5 L936.0,515.9 L935.0,516.2 L934.0,516.7 L933.0,517.3 L932.0,516.4 L931.0,516.1 L930.0,515.8 L929.0,516.5 L928.0,516.5 L927.0,516.4 L926.0,515.9 L925.0,517.2 L924.0,515.9 L923.0,515.8 L922.0,516.1 L921.0,517.9 L920.0,516.1 L919.0,515.6 L918.0,515.9 L917.0,516.9 L916.0,518.0 L915.0,515.9 L914.0,515.8 L913.0,516.2 L912.0,517.0 L911.0,516.8 L910.0,516.6 L909.0,516.4 L908.0,515.7 L907.0,516.0 L906.0,516.3 L905.0,516.9 L904.0,516.3 L903.0,516.2 L902.0,515.7 L901.0,516.3 L900.0,515.6 L899.0,515.7 L898.0,515.8 L897.0,516.4 L896.0,516.0 L895.0,516.8 L894.0,516.2 L893.0,516.8 L892.0,516.6 L891.0,515.7 L890.0,516.9 L889.0,517.3 L888.0,516.4 L887.0,516.3 L886.0,515.9 L885.0,516.7 L884.0,517.2 L883.0,516.8 L882.0,516.7 L881.0,516.0 L880.0,516.2 L879.0,516.8 L878.0,516.5 L877.0,516.9 L876.0,516.7 L875.0,516.3 L874.0,516.3 L873.0,517.1 L872.0,515.7 L871.0,516.4 L870.0,515.9 L869.0,516.4 L868.0,516.5 L867.0,516.1 L866.0,516.0 L865.0,516.6 L864.0,516.2 L863.0,516.3 L862.0,516.1 L861.0,516.1 L860.0,515.6 L859.0,516.8 L858.0,515.6 L857.0,516.2 L856.0,517.0 L855.0,516.3 L854.0,516.2 L853.0,516.0 L852.0,516.0 L851.0,516.3 L850.0,515.9 L849.0,516.0 L848.0,516.8 L847.0,516.9 L846.0,516.1 L845.0,516.1 L844.0,516.0 L843.0,515.8 L842.0,516.3 L841.0,517.8 L840.0,516.5 L839.0,516.7 L838.0,515.6 L837.0,517.9 L836.0,516.9 L835.0,517.0 L834.0,515.8 L833.0,516.9 L832.0,516.8 L831.0,516.4 L830.0,516.7 L829.0,516.2 L828.0,516.2 L827.0,516.7 L826.0,516.0 L825.0,517.1 L824.0,516.2 L823.0,516.1 L822.0,516.9 L821.0,516.9 L820.0,515.7 L819.0,516.1 L818.0,515.8 L817.0,516.0 L816.0,516.1 L815.0,517.2 L814.0,516.9 L813.0,517.9 L812.0,515.8 L811.0,516.6 L810.0,516.9 L809.0,516.5 L808.0,515.8 L807.0,515.8 L806.0,515.9 L805.0,517.5 L804.0,516.2 L803.0,515.6 L802.0,516.0 L801.0,517.9 L800.0,516.7 L799.0,516.3 L798.0,517.0 L797.0,515.7 L796.0,515.9 L795.0,516.0 L794.0,516.0 L793.0,516.9 L792.0,516.0 L791.0,516.1 L790.0,516.9 L789.0,516.5 L788.0,516.8 L787.0,516.1 L786.0,515.7 L785.0,516.6 L784.0,516.2 L783.0,516.4 L782.0,517.6 L781.0,516.7 L780.0,516.1 L779.0,516.0 L778.0,516.9 L777.0,516.7 L776.0,516.1 L775.0,516.3 L774.0,516.5 L773.0,515.8 L772.0,516.1 L771.0,516.7 L770.0,516.5 L769.0,516.8 L768.0,516.5 L767.0,516.9 L766.0,516.3 L765.0,516.3 L764.0,516.6 L763.0,515.9 L762.0,516.9 L761.0,516.4 L760.0,515.6 L759.0,516.1 L758.0,515.9 L757.0,515.7 L756.0,515.6 L755.0,516.2 L754.0,517.0 L753.0,518.1 L752.0,516.9 L751.0,516.6 L750.0,515.6 L749.0,516.3 L748.0,515.7 L747.0,517.8 L746.0,516.0 L745.0,516.8 L744.0,516.0 L743.0,516.1 L742.0,516.3 L741.0,516.0 L740.0,516.1 L739.0,516.9 L738.0,516.5 L737.0,515.8 L736.0,517.3 L735.0,515.7 L734.0,516.6 L733.0,516.0 L732.0,515.9 L731.0,515.6 L730.0,516.3 L729.0,516.6 L728.0,517.0 L727.0,516.0 L726.0,517.0 L725.0,516.7 L724.0,516.9 L723.0,516.9 L722.0,516.3 L721.0,516.4 L720.0,516.8 L719.0,516.9 L718.0,515.9 L717.0,517.3 L716.0,517.0 L715.0,515.9 L714.0,516.5 L713.0,516.6 L712.0,515.7 L711.0,516.0 L710.0,517.7 L709.0,516.3 L708.0,516.7 L707.0,516.7 L706.0,517.3 L705.0,516.0 L704.0,516.6 L703.0,516.4 L702.0,515.9 L701.0,515.7 L700.0,515.8 L699.0,515.0 L698.0,516.8 L697.0,516.1 L696.0,515.6 L695.0,515.7 L694.0,515.5 L693.0,515.2 L692.0,515.2 L691.0,516.6 L690.0,515.2 L689.0,516.2 L688.0,515.1 L687.0,516.5 L686.0,517.0 L685.0,515.1 L684.0,515.4 L683.0,516.0 L682.0,516.0 L681.0,515.7 L680.0,515.3 L679.0,516.7 L678.0,515.5 L677.0,516.7 L676.0,515.5 L675.0,515.8 L674.0,515.8 L673.0,515.3 L672.0,515.9 L671.0,515.5 L670.0,516.0 L669.0,515.9 L668.0,515.8 L667.0,516.0 L666.0,515.4 L665.0,515.1 L664.0,515.3 L663.0,517.0 L662.0,515.3 L661.0,517.0 L660.0,515.9 L659.0,516.1 L658.0,516.0 L657.0,515.0 L656.0,516.1 L655.0,515.9 L654.0,516.6 L653.0,515.8 L652.0,516.3 L651.0,515.9 L650.0,515.3 L649.0,516.0 L648.0,515.9 L647.0,515.8 L646.0,516.0 L645.0,515.7 L644.0,515.5 L643.0,516.1 L642.0,515.0 L641.0,515.4 L640.0,517.7 L639.0,516.2 L638.0,516.8 L637.0,515.8 L636.0,516.7 L635.0,516.1 L634.0,515.8 L633.0,516.2 L632.0,516.7 L631.0,515.6 L630.0,516.4 L629.0,516.1 L628.0,516.6 L627.0,515.8 L626.0,516.6 L625.0,516.0 L624.0,516.2 L623.0,516.5 L622.0,515.8 L621.0,515.7 L620.0,516.8 L619.0,516.6 L618.0,516.8 L617.0,516.7 L616.0,516.6 L615.0,516.9 L614.0,516.8 L613.0,516.5 L612.0,516.0 L611.0,516.3 L610.0,517.0 L609.0,515.6 L608.0,516.7 L607.0,516.8 L606.0,516.4 L605.0,516.5 L604.0,515.6 L603.0,515.8 L602.0,516.3 L601.0,516.5 L600.0,515.6 L599.0,516.4 L598.0,516.8 L597.0,516.5 L596.0,516.5 L595.0,516.3 L594.0,516.9 L593.0,516.7 L592.0,517.8 L591.0,515.8 L590.0,516.3 L589.0,516.1 L588.0,516.4 L587.0,516.7 L586.0,516.1 L585.0,515.8 L584.0,516.7 L583.0,516.8 L582.0,515.7 L581.0,516.1 L580.0,516.3 L579.0,516.0 L578.0,516.6 L577.0,516.3 L576.0,517.9 L575.0,515.9 L574.0,516.6 L573.0,516.6 L572.0,515.6 L571.0,516.0 L570.0,516.5 L569.0,516.4 L568.0,516.0 L567.0,516.9 L566.0,516.5 L565.0,515.8 L564.0,516.5 L563.0,516.4 L562.0,516.6 L561.0,516.3 L560.0,517.5 L559.0,516.9 L558.0,515.9 L557.0,516.5 L556.0,516.0 L555.0,516.7 L554.0,516.9 L553.0,518.0 L552.0,515.7 L551.0,515.9 L550.0,517.5 L549.0,516.9 L548.0,515.8 L547.0,516.2 L546.0,515.6 L545.0,516.4 L544.0,516.0 L543.0,515.7 L542.0,517.7 L541.0,516.0 L540.0,515.9 L539.0,516.8 L538.0,515.8 L537.0,515.8 L536.0,516.8 L535.0,516.5 L534.0,515.9 L533.0,516.2 L532.0,516.6 L531.0,516.8 L530.0,516.2 L529.0,516.7 L528.0,516.2 L527.0,516.2 L526.0,515.8 L525.0,516.0 L524.0,515.8 L523.0,516.2 L522.0,517.0 L521.0,516.4 L520.0,516.1 L519.0,516.0 L518.0,516.5 L517.0,516.0 L516.0,515.8 L515.0,515.8 L514.0,516.2 L513.0,516.9 L512.0,515.7 L511.0,516.8 L510.0,516.2 L509.0,516.5 L508.0,516.5 L507.0,516.6 L506.0,516.9 L505.0,515.7 L504.0,514.5 L503.0,514.6 L502.0,514.9 L501.0,514.5 L500.0,514.5 L499.0,514.7 L498.0,514.3 L497.0,514.9 L496.0,515.5 L495.0,514.9 L494.0,515.5 L493.0,515.0 L492.0,514.8 L491.0,514.4 L490.0,514.3 L489.0,515.0 L488.0,515.0 L487.0,515.5 L486.0,514.3 L485.0,514.3 L484.0,514.8 L483.0,514.9 L482.0,514.8 L481.0,514.4 L480.0,514.5 L479.0,515.0 L478.0,515.0 L477.0,514.6 L476.0,514.3 L475.0,514.7 L474.0,514.6 L473.0,514.6 L472.0,514.7 L471.0,514.6 L470.0,516.7 L469.0,516.7 L468.0,516.1 L467.0,515.7 L466.0,516.6 L465.0,515.7 L464.0,515.8 L463.0,516.4 L462.0,516.1 L461.0,516.0 L460.0,515.7 L459.0,516.9 L458.0,516.9 L457.0,515.6 L456.0,517.8 L455.0,516.2 L454.0,515.9 L453.0,515.6 L452.0,516.4 L451.0,517.9 L450.0,516.9 L449.0,515.8 L448.0,516.3 L447.0,516.1 L446.0,516.2 L445.0,515.9 L444.0,516.4 L443.0,516.1 L442.0,516.5 L441.0,515.8 L440.0,515.6 L439.0,516.8 L438.0,516.9 L437.0,516.8 L436.0,517.8 L435.0,516.4 L434.0,517.0 L433.0,516.0 L432.0,516.5 L431.0,516.6 L430.0,516.9 L429.0,516.2 L428.0,516.8 L427.0,515.6 L426.0,516.9 L425.0,516.1 L424.0,516.0 L423.0,516.7 L422.0,515.7 L421.0,516.7 L420.0,516.7 L419.0,515.8 L418.0,516.7 L417.0,516.3 L416.0,515.9 L415.0,516.8 L414.0,516.0 L413.0,516.8 L412.0,516.7 L411.0,516.0 L410.0,517.7 L409.0,515.8 L408.0,516.7 L407.0,516.0 L406.0,516.4 L405.0,517.8 L404.0,516.0 L403.0,516.1 L402.0,516.1 L401.0,514.4 L400.0,514.1 L399.0,514.4 L398.0,514.5 L397.0,514.4 L396.0,514.4 L395.0,514.4 L394.0,514.9 L393.0,514.0 L392.0,516.1 L391.0,517.5 L390.0,516.9 L389.0,515.9 L388.0,516.2 L387.0,516.9 L386.0,516.3 L385.0,516.5 L384.0,516.2 L383.0,516.8 L382.0,516.0 L381.0,515.6 L380.0,516.4 L379.0,515.8 L378.0,517.5 L377.0,517.1 L376.0,516.3 L375.0,516.8 L374.0,516.6 L373.0,517.6 L372.0,517.9 L371.0,516.0 L370.0,516.1 L369.0,515.7 L368.0,516.8 L367.0,517.1 L366.0,516.7 L365.0,516.6 L364.0,516.8 L363.0,516.8 L362.0,516.5 L361.0,516.8 L360.0,516.5 L359.0,516.4 L358.0,516.1 L357.0,516.3 L356.0,516.4 L355.0,516.9 L354.0,515.7 L353.0,517.9 L352.0,516.2 L351.0,516.1 L350.0,516.6 L349.0,516.6 L348.0,516.8 L347.0,517.1 L346.0,516.6 L345.0,517.6 L344.0,516.3 L343.0,516.5 L342.0,516.5 L341.0,516.7 L340.0,517.0 L339.0,515.9 L338.0,515.6 L337.0,517.6 L336.0,516.1 L335.0,515.9 Z" fill="#0a8a0a" clip-path="url(#sel)"/></svg>
<div class="r" style="left:841px;top:493px;width:124.5px;height:38px;border:1px solid #4a9fe8;border-radius:4px;"></div>
<div class="r" style="left:862.6px;top:493.5px;width:2.3999999999999773px;height:39.0px;background:#ee1111;border-radius:0px;"></div>
<div class="r" style="left:333.3px;top:540px;width:18.600000000000023px;height:18.5px;background:#2b2b2b;border-radius:4px;"></div>
<div class="t" style="left:142.60px;width:400px;text-align:center;top:539.59px;font-size:13.6px;line-height:19px;color:#e2e2e2;font-weight:normal;letter-spacing:0px;font-family:'Liberation Sans';">00</div>
<div class="r" style="left:354px;top:540px;width:18.600000000000023px;height:18.5px;background:#2b2b2b;border-radius:4px;"></div>
<div class="t" style="left:163.30px;width:400px;text-align:center;top:539.59px;font-size:13.6px;line-height:19px;color:#e2e2e2;font-weight:normal;letter-spacing:0px;font-family:'Liberation Sans';">04</div>
<div class="r" style="left:375px;top:540px;width:18.600000000000023px;height:18.5px;background:#2b2b2b;border-radius:4px;"></div>
<div class="t" style="left:184.30px;width:400px;text-align:center;top:539.59px;font-size:13.6px;line-height:19px;color:#e2e2e2;font-weight:normal;letter-spacing:0px;font-family:'Liberation Sans';">03</div>
<div class="r" style="left:396px;top:540px;width:18.600000000000023px;height:18.5px;background:#2b2b2b;border-radius:4px;"></div>
<div class="t" style="left:205.30px;width:400px;text-align:center;top:539.59px;font-size:13.6px;line-height:19px;color:#e2e2e2;font-weight:normal;letter-spacing:0px;font-family:'Liberation Sans';">24</div>
<div class="t" style="left:437.20px;top:541.30px;font-size:13px;line-height:18px;color:#e2e2e2;font-weight:normal;letter-spacing:0px;font-family:'Liberation Sans';">x1</div>
<div class="r" style="left:458.5px;top:548.2px;width:69.20000000000005px;height:4.0px;background:#1a1a1a;border-radius:2px;"></div>
<div class="r" style="left:458.5px;top:548.2px;width:35.5px;height:4.0px;background:#4a9fe8;border-radius:2px;"></div>
<div class="r" style="left:487.7px;top:544.9000000000001px;width:10.6px;height:10.6px;border-radius:50%;background:#4a9fe8"></div>
<div class="r" style="left:538.2px;top:540px;width:37.799999999999955px;height:19px;background:#303030;border-radius:6px;"></div>
<div class="t" style="left:357.10px;width:400px;text-align:center;top:541.17px;font-size:12.5px;line-height:18px;color:#e6e6e6;font-weight:normal;letter-spacing:0px;font-family:'Liberation Sans';">[&lt;</div>
<div class="r" style="left:582.1px;top:540px;width:19.600000000000023px;height:19px;background:#303030;border-radius:6px;"></div>
<div class="t" style="left:391.90px;width:400px;text-align:center;top:541.17px;font-size:12.5px;line-height:18px;color:#e6e6e6;font-weight:normal;letter-spacing:0px;font-family:'Liberation Sans';">[</div>
<div class="r" style="left:608.1px;top:540px;width:37.69999999999993px;height:19px;background:#303030;border-radius:6px;"></div>
<svg style="left:619.95px;top:543px" width="14" height="14" viewBox="0 0 14 14"><path d="M2.5 1.8L12.5 7L2.5 12.2z" fill="#f2f2f2"/></svg>
<div class="r" style="left:652px;top:540px;width:20px;height:19px;background:#303030;border-radius:6px;"></div>
<div class="t" style="left:462.00px;width:400px;text-align:center;top:541.17px;font-size:12.5px;line-height:18px;color:#e6e6e6;font-weight:normal;letter-spacing:0px;font-family:'Liberation Sans';">&lt;</div>
<div class="r" style="left:680.9px;top:540px;width:19.899999999999977px;height:19px;background:#303030;border-radius:6px;"></div>
<div class="t" style="left:490.85px;width:400px;text-align:center;top:541.17px;font-size:12.5px;line-height:18px;color:#e6e6e6;font-weight:normal;letter-spacing:0px;font-family:'Liberation Sans';">&gt;</div>
<div class="r" style="left:707px;top:540px;width:37.799999999999955px;height:19px;background:#303030;border-radius:6px;"></div>
<div class="r" style="left:720.4px;top:544px;width:11.0px;height:11px;background:#f2f2f2;border-radius:0px;"></div>
<div class="r" style="left:750.8px;top:540px;width:19.90000000000009px;height:19px;background:#303030;border-radius:6px;"></div>
<div class="t" style="left:560.75px;width:400px;text-align:center;top:541.17px;font-size:12.5px;line-height:18px;color:#e6e6e6;font-weight:normal;letter-spacing:0px;font-family:'Liberation Sans';">]</div>
<div class="r" style="left:777px;top:540px;width:37.700000000000045px;height:19px;background:#303030;border-radius:6px;"></div>
<div class="t" style="left:595.85px;width:400px;text-align:center;top:541.17px;font-size:12.5px;line-height:18px;color:#e6e6e6;font-weight:normal;letter-spacing:0px;font-family:'Liberation Sans';">&gt;]</div>
<svg style="left:824px;top:543px" width="17" height="15" viewBox="0 0 17 15">
<path d="M1.8 5h2.8l4-3.4v11.8l-4-3.4H1.8z" fill="none" stroke="#ececec" stroke-width="1.3" stroke-linejoin="round"/>
<path d="M10.8 5a3.3 3.3 0 0 1 0 5M13 3a6 6 0 0 1 0 9" fill="none" stroke="#ececec" stroke-width="1.3" stroke-linecap="round"/></svg>
<div class="r" style="left:847px;top:548.2px;width:69.60000000000002px;height:4.0px;background:#1a1a1a;border-radius:2px;"></div>
<div class="r" style="left:847px;top:548.2px;width:48px;height:4.0px;background:#4a9fe8;border-radius:2px;"></div>
<div class="r" style="left:889.6px;top:545.2px;width:10px;height:10px;border-radius:50%;background:#4a9fe8"></div>
<div class="r" style="left:937.3px;top:540px;width:18.600000000000023px;height:18.5px;background:#2b2b2b;border-radius:4px;"></div>
<div class="t" style="left:746.60px;width:400px;text-align:center;top:539.59px;font-size:13.6px;line-height:19px;color:#e2e2e2;font-weight:normal;letter-spacing:0px;font-family:'Liberation Sans';">00</div>
<div class="r" style="left:958px;top:540px;width:18.600000000000023px;height:18.5px;background:#2b2b2b;border-radius:4px;"></div>
<div class="t" style="left:767.30px;width:400px;text-align:center;top:539.59px;font-size:13.6px;line-height:19px;color:#e2e2e2;font-weight:normal;letter-spacing:0px;font-family:'Liberation Sans';">05</div>
<div class="r" style="left:979px;top:540px;width:18.600000000000023px;height:18.5px;background:#2b2b2b;border-radius:4px;"></div>
<div class="t" style="left:788.30px;width:400px;text-align:center;top:539.59px;font-size:13.6px;line-height:19px;color:#e2e2e2;font-weight:normal;letter-spacing:0px;font-family:'Liberation Sans';">03</div>
<div class="r" style="left:1000px;top:540px;width:18.600000000000023px;height:18.5px;background:#2b2b2b;border-radius:4px;"></div>
<div class="t" style="left:809.30px;width:400px;text-align:center;top:539.59px;font-size:13.6px;line-height:19px;color:#e2e2e2;font-weight:normal;letter-spacing:0px;font-family:'Liberation Sans';">20</div>
<div class="r" style="left:334px;top:570.8px;width:12px;height:12px;border-radius:50%;background:#353535"></div>
<div class="t" style="left:351.60px;top:569.14px;font-size:12px;line-height:17px;color:#e8e8e8;font-weight:normal;letter-spacing:0.09px;font-family:'Liberation Sans';">Display video timecode</div>
<div class="r" style="left:488px;top:570.8px;width:12px;height:12px;border-radius:50%;background:#353535"></div>
<div class="t" style="left:505.50px;top:569.14px;font-size:12px;line-height:17px;color:#e8e8e8;font-weight:normal;letter-spacing:0.06px;font-family:'Liberation Sans';">Frame-by-frame audio</div>
<div class="r" style="left:694.8px;top:571px;width:12px;height:12px;border-radius:50%;background:#3b4047"></div>
<svg style="left:694px;top:570px" width="14" height="14" viewBox="0 0 14 14"><path d="M2.6 7.2L5.6 10.6L11.4 2.6" fill="none" stroke="#4aa3f0" stroke-width="1.9"/></svg>
<div class="t" style="left:712.40px;top:569.14px;font-size:12px;line-height:17px;color:#e8e8e8;font-weight:normal;letter-spacing:0.05px;font-family:'Liberation Sans';">Show waveform</div>
<div class="r" style="left:810px;top:570.9px;width:12px;height:12px;border-radius:50%;background:#353535"></div>
<div class="t" style="left:827.60px;top:569.14px;font-size:12px;line-height:17px;color:#e8e8e8;font-weight:normal;letter-spacing:0.0px;font-family:'Liberation Sans';">Vu-meter</div>
<div class="t" style="left:884.50px;top:569.14px;font-size:12px;line-height:17px;color:#e8e8e8;font-weight:normal;letter-spacing:0.1px;font-family:'Liberation Sans';">Mode:</div>
<div class="r" style="left:925px;top:566px;width:74px;height:20px;background:#303030;border-radius:5px;"></div>
<div class="t" style="left:927.50px;top:568.29px;font-size:11px;line-height:15px;color:#e8e8e8;font-weight:normal;letter-spacing:0px;font-family:'Liberation Sans';">Cut</div>
<div class="r" style="left:985.00px;top:573.90px;width:0;height:0;border-left:4.50px solid transparent;border-right:4.50px solid transparent;border-top:5px solid #e8e8e8"></div>
<svg style="left:1002px;top:569px" width="20" height="14" viewBox="0 0 20 14">
<path d="M1.7 6.9C4.2 3.5 7 2 10 2S15.8 3.5 18.3 6.9C15.8 10.3 13 11.7 10 11.7S4.2 10.3 1.7 6.9z" fill="#ececec"/>
<circle cx="10" cy="6.9" r="3.2" fill="#232323"/><circle cx="8.6" cy="5.5" r="0.7" fill="#dcdcdc"/></svg>
<div class="r" style="left:1030px;top:38px;width:306px;height:91px;border:1px solid #3a3a3a;border-radius:3px;"></div>
<div class="r" style="left:1034px;top:37px;width:46px;height:3px;background:#232323;border-radius:0px;"></div>
<div class="t" style="left:1036.30px;top:31.74px;font-size:12px;line-height:17px;color:#e8e8e8;font-weight:normal;letter-spacing:0.85px;font-family:'Liberation Sans';-webkit-text-stroke:0.3px currentColor;">Image</div>
<div class="t" style="left:1040.20px;top:51.24px;font-size:12px;line-height:17px;color:#e8e8e8;font-weight:normal;letter-spacing:0.15px;font-family:'Liberation Sans';">Scale:</div>
<div class="r" style="left:1087px;top:50px;width:115px;height:20px;background:#303030;border-radius:5px;"></div>
<div class="r" style="left:1183px;top:50px;width:1px;height:20px;background:#555;border-radius:0px;"></div>
<div class="r" style="left:1188.00px;top:57.50px;width:0;height:0;border-left:4.50px solid transparent;border-right:4.50px solid transparent;border-top:5px solid #e8e8e8"></div>
<div class="t" style="left:1089.30px;top:51.99px;font-size:11px;line-height:15px;color:#e8e8e8;font-weight:normal;letter-spacing:0px;font-family:'Liberation Sans';">Source</div>
<svg style="left:1211px;top:51.8px" width="20" height="17" viewBox="0 0 20 17">
<g fill="none" stroke="#ececec" stroke-width="1.6" stroke-linecap="round">
<path d="M2.5 6V4.2a2 2 0 0 1 2-2H6.5M13.5 2.2h2a2 2 0 0 1 2 2V6M17.5 11v1.8a2 2 0 0 1-2 2h-2M6.5 14.8h-2a2 2 0 0 1-2-2V11"/></g>
<path d="M6 6.3h2l.9-1.3h2.2l.9 1.3h2a.8.8 0 0 1 .8.8v4.3a.8.8 0 0 1-.8.8H6a.8.8 0 0 1-.8-.8V7.1A.8.8 0 0 1 6 6.3z" fill="#ececec"/>
<circle cx="10" cy="8.9" r="2.1" fill="#232323"/><circle cx="10" cy="8.9" r="1.0" fill="#ececec"/></svg>
<div class="r" style="left:1038.9px;top:82.7px;width:12px;height:12px;border-radius:50%;background:#353535"></div>
<div class="t" style="left:1056.50px;top:81.04px;font-size:12px;line-height:17px;color:#e8e8e8;font-weight:normal;letter-spacing:0.1px;font-family:'Liberation Sans';">Rotation:</div>
<div class="r" style="left:1112px;top:82px;width:44px;height:14px;background:#2a2a2a;border-radius:5px;"></div>
<div class="t" style="left:1114.40px;top:82.16px;font-size:10.5px;line-height:15px;color:#5e5e5e;font-weight:normal;letter-spacing:0px;font-family:'Liberation Sans';">180</div>
<div class="r" style="left:1145.20px;top:86.75px;width:0;height:0;border-left:4.00px solid transparent;border-right:4.00px solid transparent;border-top:4.5px solid #5e5e5e"></div>
<div class="r" style="left:1166.9px;top:82.7px;width:12px;height:12px;border-radius:50%;background:#353535"></div>
<div class="t" style="left:1184.10px;top:81.04px;font-size:12px;line-height:17px;color:#e8e8e8;font-weight:normal;letter-spacing:0.03px;font-family:'Liberation Sans';">Mirror</div>
<div class="r" style="left:1038.9px;top:105.4px;width:12px;height:12px;border-radius:50%;background:#353535"></div>
<div class="t" style="left:1056.50px;top:103.84px;font-size:12px;line-height:17px;color:#e8e8e8;font-weight:normal;letter-spacing:0.1px;font-family:'Liberation Sans';">Force display:</div>
<div class="r" style="left:1139px;top:105px;width:52px;height:14px;background:#2a2a2a;border-radius:5px;"></div>
<div class="r" style="left:1176px;top:105px;width:1px;height:14px;background:#4a4a4a;border-radius:0px;"></div>
<div class="t" style="left:1141.70px;top:105.16px;font-size:10.5px;line-height:15px;color:#5e5e5e;font-weight:normal;letter-spacing:0px;font-family:'Liberation Sans';">16:9</div>
<div class="r" style="left:1179.70px;top:109.75px;width:0;height:0;border-left:4.00px solid transparent;border-right:4.00px solid transparent;border-top:4.5px solid #5e5e5e"></div>
<div class="r" style="left:1030px;top:146px;width:306px;height:6px;border:1px solid #393939;border-radius:3px;"></div>
<div class="r" style="left:1034px;top:145px;width:94.79999999999995px;height:10px;background:#232323;border-radius:0px;"></div>
<div class="t" style="left:1036.30px;top:139.94px;font-size:12px;line-height:17px;color:#e8e8e8;font-weight:normal;letter-spacing:0.8px;font-family:'Liberation Sans';-webkit-text-stroke:0.3px currentColor;">Audio settings</div>
<div class="r" style="left:1030px;top:169px;width:306px;height:79px;border:1px solid #3a3a3a;border-radius:3px;"></div>
<div class="r" style="left:1034px;top:168px;width:103px;height:3px;background:#232323;border-radius:0px;"></div>
<div class="t" style="left:1036.30px;top:162.84px;font-size:12px;line-height:17px;color:#e8e8e8;font-weight:normal;letter-spacing:0.9px;font-family:'Liberation Sans';-webkit-text-stroke:0.3px currentColor;">Image cropping</div>
<div class="r" style="left:1039.8px;top:183px;width:12px;height:12px;border-radius:50%;background:#3b4047"></div>
<svg style="left:1039px;top:182px" width="14" height="14" viewBox="0 0 14 14"><path d="M2.6 7.2L5.6 10.6L11.4 2.6" fill="none" stroke="#4aa3f0" stroke-width="1.9"/></svg>
<div class="t" style="left:1057.60px;top:181.14px;font-size:12px;line-height:17px;color:#e8e8e8;font-weight:normal;letter-spacing:0.0px;font-family:'Liberation Sans';">Enable</div>
<div class="t" style="left:1133.70px;top:181.14px;font-size:12px;line-height:17px;color:#e8e8e8;font-weight:normal;letter-spacing:0.1px;font-family:'Liberation Sans';">Pre-settings:</div>
<div class="r" style="left:1206px;top:180px;width:80px;height:20px;background:#303030;border-radius:5px;"></div>
<div class="r" style="left:1266px;top:180px;width:1px;height:20px;background:#555;border-radius:0px;"></div>
<div class="r" style="left:1271.50px;top:187.50px;width:0;height:0;border-left:4.50px solid transparent;border-right:4.50px solid transparent;border-top:5px solid #e8e8e8"></div>
<div class="t" style="left:1207.90px;top:182.39px;font-size:11px;line-height:15px;color:#e8e8e8;font-weight:normal;letter-spacing:0px;font-family:'Liberation Sans';">2.75</div>
<div class="t" style="right:242.20px;top:205.44px;font-size:12px;line-height:17px;color:#4a9ee6;font-weight:normal;letter-spacing:0.05px;font-family:'Liberation Sans';">Position X:</div>
<div class="t" style="right:242.20px;top:224.94px;font-size:12px;line-height:17px;color:#4a9ee6;font-weight:normal;letter-spacing:0.05px;font-family:'Liberation Sans';">Width:</div>
<div class="t" style="right:102.90px;top:205.44px;font-size:12px;line-height:17px;color:#4a9ee6;font-weight:normal;letter-spacing:0.05px;font-family:'Liberation Sans';">Position Y:</div>
<div class="t" style="right:102.90px;top:224.94px;font-size:12px;line-height:17px;color:#4a9ee6;font-weight:normal;letter-spacing:0.05px;font-family:'Liberation Sans';">Height:</div>
<div class="r" style="left:1113.3px;top:206px;width:31.200000000000045px;height:14px;background:#2b2b2b;border-radius:4px;"></div>
<div class="r" style="left:1113.3px;top:226px;width:31.200000000000045px;height:13.5px;background:#2b2b2b;border-radius:4px;"></div>
<div class="r" style="left:1252.4px;top:206px;width:31.299999999999955px;height:14px;background:#2b2b2b;border-radius:4px;"></div>
<div class="r" style="left:1252.4px;top:226px;width:31.299999999999955px;height:13.5px;background:#2b2b2b;border-radius:4px;"></div>
<div class="t" style="right:209.30px;top:205.44px;font-size:12px;line-height:17px;color:#e8e8e8;font-weight:normal;letter-spacing:0px;font-family:'Liberation Sans';">0</div>
<div class="t" style="right:209.30px;top:224.94px;font-size:12px;line-height:17px;color:#e8e8e8;font-weight:normal;letter-spacing:0.1px;font-family:'Liberation Sans';">1920</div>
<div class="t" style="right:70.00px;top:205.44px;font-size:12px;line-height:17px;color:#e8e8e8;font-weight:normal;letter-spacing:0.1px;font-family:'Liberation Sans';">191</div>
<div class="t" style="right:70.00px;top:224.94px;font-size:12px;line-height:17px;color:#e8e8e8;font-weight:normal;letter-spacing:0.1px;font-family:'Liberation Sans';">698</div>
<div class="t" style="left:1148.00px;top:205.44px;font-size:12px;line-height:17px;color:#4a9ee6;font-weight:normal;letter-spacing:0px;font-family:'Liberation Sans';">px</div>
<div class="t" style="left:1148.00px;top:224.94px;font-size:12px;line-height:17px;color:#4a9ee6;font-weight:normal;letter-spacing:0px;font-family:'Liberation Sans';">px</div>
<div class="t" style="left:1287.20px;top:205.44px;font-size:12px;line-height:17px;color:#4a9ee6;font-weight:normal;letter-spacing:0px;font-family:'Liberation Sans';">px</div>
<div class="t" style="left:1287.20px;top:224.94px;font-size:12px;line-height:17px;color:#4a9ee6;font-weight:normal;letter-spacing:0px;font-family:'Liberation Sans';">px</div>
<div class="r" style="left:1030px;top:265px;width:306px;height:6px;border:1px solid #393939;border-radius:3px;"></div>
<div class="r" style="left:1034px;top:264px;width:215.79999999999995px;height:10px;background:#232323;border-radius:0px;"></div>
<div class="t" style="left:1036.30px;top:258.44px;font-size:12px;line-height:17px;color:#e8e8e8;font-weight:normal;letter-spacing:0.826px;font-family:'Liberation Sans';-webkit-text-stroke:0.3px currentColor;">Display timecode / file name / text</div>
<div class="r" style="left:1030px;top:288px;width:306px;height:6px;border:1px solid #393939;border-radius:3px;"></div>
<div class="r" style="left:1034px;top:287px;width:86.29999999999995px;height:10px;background:#232323;border-radius:0px;"></div>
<div class="t" style="left:1036.30px;top:281.49px;font-size:12px;line-height:17px;color:#e8e8e8;font-weight:normal;letter-spacing:0.774px;font-family:'Liberation Sans';-webkit-text-stroke:0.3px currentColor;">Add subtitles</div>
<div class="r" style="left:1030px;top:311px;width:306px;height:6px;border:1px solid #393939;border-radius:3px;"></div>
<div class="r" style="left:1034px;top:310px;width:203.5999999999999px;height:10px;background:#232323;border-radius:0px;"></div>
<div class="t" style="left:1036.30px;top:304.54px;font-size:12px;line-height:17px;color:#e8e8e8;font-weight:normal;letter-spacing:0.824px;font-family:'Liberation Sans';-webkit-text-stroke:0.3px currentColor;">Add image / video as watermark</div>
<div class="r" style="left:1030px;top:334px;width:306px;height:6px;border:1px solid #393939;border-radius:3px;"></div>
<div class="r" style="left:1034px;top:333px;width:79.5px;height:10px;background:#232323;border-radius:0px;"></div>
<div class="t" style="left:1036.30px;top:327.59px;font-size:12px;line-height:17px;color:#e8e8e8;font-weight:normal;letter-spacing:0.986px;font-family:'Liberation Sans';-webkit-text-stroke:0.3px currentColor;">Colorimetry</div>
<div class="r" style="left:1030px;top:357px;width:306px;height:6px;border:1px solid #393939;border-radius:3px;"></div>
<div class="r" style="left:1034px;top:356px;width:117.29999999999995px;height:10px;background:#232323;border-radius:0px;"></div>
<div class="t" style="left:1036.30px;top:350.64px;font-size:12px;line-height:17px;color:#e8e8e8;font-weight:normal;letter-spacing:0.908px;font-family:'Liberation Sans';-webkit-text-stroke:0.3px currentColor;">Image adjustment</div>
<div class="r" style="left:1030px;top:380px;width:306px;height:6px;border:1px solid #393939;border-radius:3px;"></div>
<div class="r" style="left:1034px;top:379px;width:78.29999999999995px;height:10px;background:#232323;border-radius:0px;"></div>
<div class="t" style="left:1036.30px;top:373.69px;font-size:12px;line-height:17px;color:#e8e8e8;font-weight:normal;letter-spacing:0.865px;font-family:'Liberation Sans';-webkit-text-stroke:0.3px currentColor;">Corrections</div>
<div class="r" style="left:1030px;top:403px;width:306px;height:6px;border:1px solid #393939;border-radius:3px;"></div>
<div class="r" style="left:1034px;top:402px;width:73.39999999999986px;height:10px;background:#232323;border-radius:0px;"></div>
<div class="t" style="left:1036.30px;top:396.74px;font-size:12px;line-height:17px;color:#e8e8e8;font-weight:normal;letter-spacing:0.686px;font-family:'Liberation Sans';-webkit-text-stroke:0.3px currentColor;">Transitions</div>
<div class="r" style="left:1030px;top:426px;width:306px;height:6px;border:1px solid #393939;border-radius:3px;"></div>
<div class="r" style="left:1034px;top:425px;width:106.70000000000005px;height:10px;background:#232323;border-radius:0px;"></div>
<div class="t" style="left:1036.30px;top:419.79px;font-size:12px;line-height:17px;color:#e8e8e8;font-weight:normal;letter-spacing:0.744px;font-family:'Liberation Sans';-webkit-text-stroke:0.3px currentColor;">Image sequence</div>
<div class="r" style="left:1030px;top:449px;width:306px;height:6px;border:1px solid #393939;border-radius:3px;"></div>
<div class="r" style="left:1034px;top:448px;width:67.09999999999991px;height:10px;background:#232323;border-radius:0px;"></div>
<div class="t" style="left:1036.30px;top:442.84px;font-size:12px;line-height:17px;color:#e8e8e8;font-weight:normal;letter-spacing:0.937px;font-family:'Liberation Sans';-webkit-text-stroke:0.3px currentColor;">Timecode</div>
<div class="r" style="left:1030px;top:472px;width:306px;height:6px;border:1px solid #393939;border-radius:3px;"></div>
<div class="r" style="left:1034px;top:471px;width:121.39999999999986px;height:10px;background:#232323;border-radius:0px;"></div>
<div class="t" style="left:1036.30px;top:465.89px;font-size:12px;line-height:17px;color:#e8e8e8;font-weight:normal;letter-spacing:0.815px;font-family:'Liberation Sans';-webkit-text-stroke:0.3px currentColor;">Advanced features</div>
<div class="r" style="left:1031px;top:489px;width:307px;height:18.5px;background:#303030;border-radius:6px;"></div>
<div class="t" style="left:984.50px;width:400px;text-align:center;top:491.34px;font-size:12px;line-height:17px;color:#e8e8e8;font-weight:normal;letter-spacing:0.3px;font-family:'Liberation Sans';-webkit-text-stroke:0.3px currentColor;">Reset</div>
<div class="t" style="left:8.10px;top:643.04px;font-size:12px;line-height:17px;color:#e6e6e6;font-weight:normal;letter-spacing:0.02px;font-family:'Liberation Sans';">by Paul Pacifico</div>
<div class="t" style="left:448.10px;top:643.34px;font-size:12px;line-height:17px;color:#e0e0e0;font-weight:normal;letter-spacing:0.06px;font-family:'Liberation Sans';">Set GPU decoding to:</div>
<div class="r" style="left:572px;top:644px;width:80px;height:14px;background:#2e2e2e;border-radius:5px;"></div>
<div class="t" style="left:573.80px;top:644.34px;font-size:10px;line-height:14px;color:#e0e0e0;font-weight:normal;letter-spacing:0px;font-family:'Liberation Sans';">auto</div>
<div class="r" style="left:641.40px;top:648.50px;width:0;height:0;border-left:4.50px solid transparent;border-right:4.50px solid transparent;border-top:5px solid #e8e8e8"></div>
<div class="t" style="left:659.60px;top:643.34px;font-size:12px;line-height:17px;color:#e0e0e0;font-weight:normal;letter-spacing:0.14px;font-family:'Liberation Sans';">Hardware acceleration:</div>
<div class="r" style="left:791px;top:644px;width:113px;height:14px;background:#2e2e2e;border-radius:5px;"></div>
<div class="t" style="left:793.30px;top:644.34px;font-size:10px;line-height:14px;color:#e0e0e0;font-weight:normal;letter-spacing:0px;font-family:'Liberation Sans';">none</div>
<div class="r" style="left:892.50px;top:648.50px;width:0;height:0;border-left:4.50px solid transparent;border-right:4.50px solid transparent;border-top:5px solid #e8e8e8"></div>
<div class="t" style="right:8.60px;top:643.10px;font-size:12.4px;line-height:17px;color:#e6e6e6;font-weight:normal;letter-spacing:0.05px;font-family:'Liberation Sans';">2013-2023</div>
</div></body></html>
